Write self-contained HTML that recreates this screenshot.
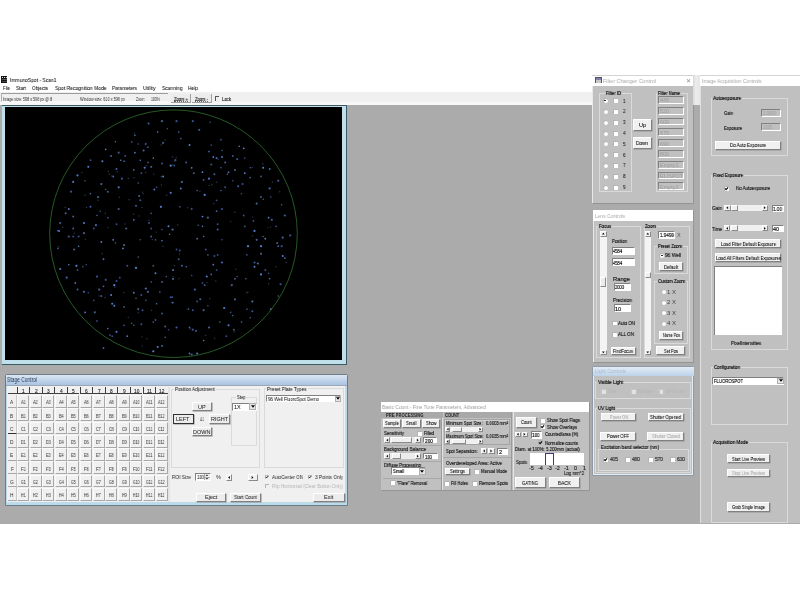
<!DOCTYPE html><html><head><meta charset="utf-8"><style>
html,body{margin:0;padding:0;}
body{width:800px;height:600px;position:relative;overflow:hidden;background:#fff;font-family:"Liberation Sans",sans-serif;}
div{position:absolute;box-sizing:border-box;}
svg{overflow:visible;}
.t{white-space:nowrap;transform-origin:0 50%;will-change:transform;}
</style></head><body>
<div style="left:1px;top:76.2px;width:6.20px;height:7.00px;background:#161616;"></div>
<div style="left:2px;top:77px;width:1.00px;height:1.20px;background:#ddd;"></div>
<div style="left:3.8px;top:77px;width:1.00px;height:1.20px;background:#ddd;"></div>
<div style="left:5.6px;top:77px;width:1.00px;height:1.20px;background:#ddd;"></div>
<div style="left:1.6px;top:79.4px;width:5.00px;height:0.70px;background:#555;"></div>
<div style="left:1.6px;top:81px;width:5.00px;height:0.60px;background:#444;"></div>
<div class="t" style="left:10.00px;top:75.00px;font-size:5.5px;line-height:10px;color:#111;transform:scaleX(0.900);-webkit-text-stroke:0.04px #111;">ImmunoSpot - Scan1</div>
<div class="t" style="left:3.00px;top:83.00px;font-size:6px;line-height:10px;color:#111;transform:scaleX(0.724);-webkit-text-stroke:0.05px #111;">File</div>
<div class="t" style="left:16.00px;top:83.00px;font-size:6px;line-height:10px;color:#111;transform:scaleX(0.789);-webkit-text-stroke:0.05px #111;">Start</div>
<div class="t" style="left:32.00px;top:83.00px;font-size:6px;line-height:10px;color:#111;transform:scaleX(0.787);-webkit-text-stroke:0.05px #111;">Objects</div>
<div class="t" style="left:55.00px;top:83.00px;font-size:6px;line-height:10px;color:#111;transform:scaleX(0.827);-webkit-text-stroke:0.05px #111;">Spot Recognition Mode</div>
<div class="t" style="left:112.00px;top:83.00px;font-size:6px;line-height:10px;color:#111;transform:scaleX(0.806);-webkit-text-stroke:0.05px #111;">Parameters</div>
<div class="t" style="left:143.00px;top:83.00px;font-size:6px;line-height:10px;color:#111;transform:scaleX(0.852);-webkit-text-stroke:0.05px #111;">Utility</div>
<div class="t" style="left:161.50px;top:83.00px;font-size:6px;line-height:10px;color:#111;transform:scaleX(0.819);-webkit-text-stroke:0.05px #111;">Scanning</div>
<div class="t" style="left:188.00px;top:83.00px;font-size:6px;line-height:10px;color:#111;transform:scaleX(0.810);-webkit-text-stroke:0.05px #111;">Help</div>
<div style="left:0px;top:105px;width:800.00px;height:418.50px;background:#ababab;"></div>
<div style="left:0px;top:92px;width:800.00px;height:13.00px;background:#f0f0f0;"></div>
<div style="left:0px;top:102.3px;width:800.00px;height:2.70px;background:#f7f9f9;"></div>
<div style="left:0.5px;top:92.6px;width:167.50px;height:9.40px;border-top:1px solid #9c9c9c;border-left:1px solid #b0b0b0;border-bottom:1px solid #fafafa;"></div>
<div class="t" style="left:3.00px;top:94.00px;font-size:5px;line-height:10px;color:#333;transform:scaleX(0.740);">Image size:  598 x 598 px @ 8</div>
<div class="t" style="left:80.00px;top:94.00px;font-size:5px;line-height:10px;color:#333;transform:scaleX(0.756);">Window size:  610 x 598 px</div>
<div class="t" style="left:136.00px;top:94.00px;font-size:5px;line-height:10px;color:#333;transform:scaleX(0.635);">Zoom:</div>
<div class="t" style="left:151.00px;top:94.00px;font-size:5px;line-height:10px;color:#333;transform:scaleX(0.704);">100%</div>
<div style="left:171px;top:94px;width:20.00px;height:9.00px;background:#ececec;border-right:1px solid #a0a0a0;border-bottom:1px solid #a0a0a0;"></div>
<div class="t" style="left:174.00px;top:95.00px;font-size:4.8px;line-height:10px;color:#222;transform:scaleX(0.853);-webkit-text-stroke:0.14px #222;">Zoom +</div>
<div style="left:174px;top:101.2px;width:14.00px;height:0.60px;border-top:0.5px dotted #666;"></div>
<div style="left:191.5px;top:94px;width:20.00px;height:9.00px;background:#ececec;border-right:1px solid #a0a0a0;border-bottom:1px solid #a0a0a0;"></div>
<div class="t" style="left:195.00px;top:95.00px;font-size:4.8px;line-height:10px;color:#222;transform:scaleX(0.855);-webkit-text-stroke:0.14px #222;">Zoom -</div>
<div style="left:195px;top:101.2px;width:13.00px;height:0.60px;border-top:0.5px dotted #666;"></div>
<div style="left:214.7px;top:95.8px;width:4.30px;height:5.20px;border-top:1px solid #555;border-left:1px solid #555;"></div>
<div class="t" style="left:222.00px;top:95.00px;font-size:4.8px;line-height:10px;color:#222;transform:scaleX(0.888);-webkit-text-stroke:0.14px #222;">Lock</div>
<div style="left:1.5px;top:105px;width:345.00px;height:259.50px;background:#bfe0ea;border-bottom:1px solid #3b5a66;border-right:1px solid #3b5a66;border-top:1.6px solid #3f5a60;"></div>
<div style="left:5px;top:107px;width:336.70px;height:253.30px;background:#000;"></div>
<svg style="position:absolute;left:0;top:0" width="800" height="600"><circle cx="173.5" cy="233.7" r="123.8" stroke="#358035" stroke-width="0.7" fill="none"/><circle cx="148.6" cy="123.4" r="1.0" fill="#4462a8"/><circle cx="162.0" cy="121.2" r="1.1" fill="#44608e"/><circle cx="167.4" cy="128.8" r="0.8" fill="#3a5290"/><circle cx="157.7" cy="132.1" r="0.8" fill="#4e72c0"/><circle cx="134.9" cy="135.3" r="0.8" fill="#5680cc"/><circle cx="131.7" cy="141.8" r="0.9" fill="#3a5290"/><circle cx="138.2" cy="144.0" r="0.8" fill="#38508a"/><circle cx="145.8" cy="144.0" r="1.1" fill="#3a5290"/><circle cx="147.9" cy="147.2" r="0.9" fill="#3a5290"/><circle cx="163.1" cy="142.9" r="1.1" fill="#3a5290"/><circle cx="115.4" cy="141.8" r="0.8" fill="#4462a8"/><circle cx="105.7" cy="149.4" r="0.8" fill="#5680cc"/><circle cx="118.7" cy="152.7" r="1.1" fill="#3a5290"/><circle cx="125.2" cy="155.9" r="0.9" fill="#3a5290"/><circle cx="134.9" cy="152.7" r="0.9" fill="#4e72c0"/><circle cx="143.6" cy="150.5" r="1.1" fill="#4462a8"/><circle cx="153.3" cy="158.1" r="0.8" fill="#5680cc"/><circle cx="102.4" cy="161.3" r="1.0" fill="#5680cc"/><circle cx="90.5" cy="160.2" r="0.9" fill="#3a5290"/><circle cx="111.1" cy="155.9" r="0.9" fill="#4e72c0"/><circle cx="120.8" cy="160.2" r="0.8" fill="#5680cc"/><circle cx="124.1" cy="161.3" r="0.8" fill="#5680cc"/><circle cx="140.3" cy="160.2" r="0.8" fill="#5680cc"/><circle cx="147.9" cy="162.4" r="0.9" fill="#38508a"/><circle cx="151.2" cy="166.8" r="1.1" fill="#4a5a7a"/><circle cx="162.0" cy="163.5" r="1.0" fill="#38508a"/><circle cx="88.3" cy="166.8" r="1.1" fill="#4e72c0"/><circle cx="116.5" cy="168.9" r="1.0" fill="#4462a8"/><circle cx="133.8" cy="170.0" r="0.9" fill="#44608e"/><circle cx="141.4" cy="173.2" r="0.9" fill="#3a5290"/><circle cx="144.7" cy="167.8" r="1.0" fill="#5680cc"/><circle cx="77.5" cy="175.4" r="1.1" fill="#4e72c0"/><circle cx="73.2" cy="181.9" r="1.1" fill="#4e72c0"/><circle cx="85.1" cy="180.8" r="0.8" fill="#3a5290"/><circle cx="101.3" cy="184.1" r="1.1" fill="#4462a8"/><circle cx="113.2" cy="176.5" r="1.0" fill="#4462a8"/><circle cx="121.9" cy="178.7" r="1.1" fill="#38508a"/><circle cx="138.2" cy="183.0" r="0.8" fill="#44608e"/><circle cx="156.6" cy="187.3" r="0.8" fill="#4a5a7a"/><circle cx="154.4" cy="189.5" r="1.0" fill="#4e72c0"/><circle cx="163.1" cy="176.5" r="1.0" fill="#5680cc"/><circle cx="170.7" cy="165.7" r="1.1" fill="#5680cc"/><circle cx="71.0" cy="191.7" r="1.1" fill="#3a5290"/><circle cx="90.5" cy="193.8" r="0.8" fill="#4e72c0"/><circle cx="98.1" cy="197.1" r="1.1" fill="#44608e"/><circle cx="105.7" cy="189.5" r="0.8" fill="#3a5290"/><circle cx="107.8" cy="191.7" r="1.0" fill="#44608e"/><circle cx="118.7" cy="187.3" r="1.1" fill="#4e72c0"/><circle cx="139.2" cy="196.0" r="1.1" fill="#44608e"/><circle cx="140.3" cy="200.3" r="1.0" fill="#3a5290"/><circle cx="170.7" cy="192.8" r="1.1" fill="#4e72c0"/><circle cx="68.8" cy="209.0" r="0.9" fill="#5680cc"/><circle cx="100.2" cy="211.2" r="0.8" fill="#38508a"/><circle cx="97.0" cy="215.5" r="0.8" fill="#4462a8"/><circle cx="90.5" cy="206.8" r="1.0" fill="#4462a8"/><circle cx="107.8" cy="217.7" r="0.9" fill="#38508a"/><circle cx="118.7" cy="209.0" r="1.1" fill="#4a5a7a"/><circle cx="136.0" cy="205.8" r="1.1" fill="#3a5290"/><circle cx="151.2" cy="213.3" r="0.9" fill="#38508a"/><circle cx="160.9" cy="206.8" r="1.1" fill="#5680cc"/><circle cx="65.6" cy="213.3" r="1.0" fill="#4462a8"/><circle cx="60.2" cy="223.1" r="1.1" fill="#4a5a7a"/><circle cx="73.2" cy="216.6" r="1.0" fill="#44608e"/><circle cx="84.0" cy="223.1" r="1.1" fill="#4e72c0"/><circle cx="95.9" cy="225.2" r="1.1" fill="#4462a8"/><circle cx="93.8" cy="228.5" r="0.9" fill="#3a5290"/><circle cx="73.2" cy="228.5" r="0.9" fill="#4462a8"/><circle cx="58.0" cy="230.7" r="0.9" fill="#44608e"/><circle cx="116.5" cy="224.2" r="0.9" fill="#3a5290"/><circle cx="126.2" cy="228.5" r="1.1" fill="#4a5a7a"/><circle cx="133.8" cy="219.8" r="0.9" fill="#4e72c0"/><circle cx="149.0" cy="223.1" r="1.0" fill="#3a5290"/><circle cx="151.2" cy="228.5" r="0.9" fill="#38508a"/><circle cx="168.5" cy="226.3" r="1.0" fill="#5680cc"/><circle cx="172.8" cy="229.6" r="1.0" fill="#4462a8"/><circle cx="162.0" cy="229.6" r="0.8" fill="#38508a"/><circle cx="176.5" cy="121.2" r="1.1" fill="#38508a"/><circle cx="192.8" cy="121.2" r="1.1" fill="#38508a"/><circle cx="210.1" cy="122.3" r="0.8" fill="#38508a"/><circle cx="199.2" cy="129.9" r="1.1" fill="#3a5290"/><circle cx="178.7" cy="132.1" r="0.9" fill="#3a5290"/><circle cx="180.8" cy="138.6" r="0.9" fill="#38508a"/><circle cx="220.9" cy="139.7" r="0.9" fill="#3a5290"/><circle cx="189.5" cy="145.1" r="1.0" fill="#5680cc"/><circle cx="211.2" cy="145.1" r="0.8" fill="#3a5290"/><circle cx="239.3" cy="146.2" r="0.8" fill="#5680cc"/><circle cx="243.7" cy="148.3" r="0.9" fill="#5680cc"/><circle cx="209.0" cy="151.6" r="0.8" fill="#4e72c0"/><circle cx="222.0" cy="150.5" r="0.8" fill="#3a5290"/><circle cx="213.3" cy="157.0" r="0.9" fill="#5680cc"/><circle cx="216.6" cy="158.1" r="1.1" fill="#4462a8"/><circle cx="222.0" cy="157.0" r="1.0" fill="#4e72c0"/><circle cx="232.8" cy="155.9" r="1.0" fill="#38508a"/><circle cx="244.8" cy="158.1" r="0.8" fill="#3a5290"/><circle cx="237.2" cy="159.2" r="1.1" fill="#38508a"/><circle cx="175.4" cy="160.2" r="1.1" fill="#38508a"/><circle cx="186.2" cy="162.4" r="1.0" fill="#3a5290"/><circle cx="174.3" cy="165.7" r="0.9" fill="#3a5290"/><circle cx="225.2" cy="162.4" r="1.0" fill="#44608e"/><circle cx="211.2" cy="164.6" r="1.0" fill="#38508a"/><circle cx="191.7" cy="167.8" r="0.9" fill="#5680cc"/><circle cx="220.9" cy="167.8" r="0.8" fill="#4462a8"/><circle cx="228.5" cy="172.2" r="1.0" fill="#4462a8"/><circle cx="227.4" cy="174.3" r="0.8" fill="#4a5a7a"/><circle cx="235.0" cy="170.0" r="1.0" fill="#44608e"/><circle cx="250.2" cy="167.8" r="0.8" fill="#44608e"/><circle cx="263.2" cy="167.8" r="1.0" fill="#5680cc"/><circle cx="269.7" cy="168.9" r="1.0" fill="#4462a8"/><circle cx="193.8" cy="173.2" r="1.0" fill="#4a5a7a"/><circle cx="202.5" cy="172.2" r="0.9" fill="#5680cc"/><circle cx="214.4" cy="174.3" r="1.0" fill="#44608e"/><circle cx="244.8" cy="173.2" r="0.9" fill="#5680cc"/><circle cx="250.2" cy="177.6" r="0.9" fill="#4a5a7a"/><circle cx="261.0" cy="176.5" r="0.9" fill="#4a5a7a"/><circle cx="181.9" cy="181.9" r="1.1" fill="#44608e"/><circle cx="203.6" cy="179.8" r="0.9" fill="#4462a8"/><circle cx="209.0" cy="178.7" r="1.1" fill="#4e72c0"/><circle cx="232.8" cy="180.8" r="0.8" fill="#3a5290"/><circle cx="242.6" cy="184.1" r="1.0" fill="#38508a"/><circle cx="238.2" cy="186.2" r="1.0" fill="#4462a8"/><circle cx="225.2" cy="187.3" r="1.0" fill="#38508a"/><circle cx="180.8" cy="188.4" r="1.0" fill="#4e72c0"/><circle cx="197.1" cy="190.6" r="0.8" fill="#4462a8"/><circle cx="220.9" cy="190.6" r="0.8" fill="#4462a8"/><circle cx="269.7" cy="188.4" r="1.1" fill="#4462a8"/><circle cx="278.3" cy="180.8" r="1.0" fill="#4462a8"/><circle cx="204.7" cy="194.9" r="1.1" fill="#5680cc"/><circle cx="241.5" cy="193.8" r="0.8" fill="#38508a"/><circle cx="261.0" cy="197.1" r="1.0" fill="#4a5a7a"/><circle cx="263.2" cy="199.2" r="0.8" fill="#4a5a7a"/><circle cx="270.8" cy="197.1" r="0.8" fill="#38508a"/><circle cx="216.6" cy="200.3" r="0.9" fill="#38508a"/><circle cx="179.8" cy="206.8" r="0.9" fill="#38508a"/><circle cx="191.7" cy="209.0" r="1.0" fill="#3a5290"/><circle cx="222.0" cy="209.0" r="1.1" fill="#38508a"/><circle cx="256.7" cy="203.6" r="1.1" fill="#44608e"/><circle cx="281.6" cy="204.7" r="0.8" fill="#44608e"/><circle cx="216.6" cy="211.2" r="0.9" fill="#4462a8"/><circle cx="243.7" cy="215.5" r="0.9" fill="#3a5290"/><circle cx="202.5" cy="216.6" r="0.9" fill="#5680cc"/><circle cx="207.9" cy="217.7" r="1.1" fill="#4a5a7a"/><circle cx="268.6" cy="217.7" r="0.9" fill="#5680cc"/><circle cx="271.8" cy="219.8" r="1.1" fill="#44608e"/><circle cx="284.8" cy="215.5" r="1.0" fill="#4462a8"/><circle cx="253.4" cy="220.9" r="0.9" fill="#3a5290"/><circle cx="198.2" cy="225.2" r="0.8" fill="#4a5a7a"/><circle cx="202.5" cy="226.3" r="0.8" fill="#5680cc"/><circle cx="217.7" cy="224.2" r="0.9" fill="#38508a"/><circle cx="244.8" cy="226.3" r="0.9" fill="#4a5a7a"/><circle cx="276.2" cy="226.3" r="0.9" fill="#3a5290"/><circle cx="217.7" cy="229.6" r="1.0" fill="#4462a8"/><circle cx="254.5" cy="230.7" r="1.0" fill="#5680cc"/><circle cx="172.2" cy="229.6" r="0.9" fill="#4a5a7a"/><circle cx="59.1" cy="231.1" r="1.0" fill="#4e72c0"/><circle cx="68.8" cy="236.5" r="1.1" fill="#4a5a7a"/><circle cx="73.2" cy="236.5" r="0.9" fill="#3a5290"/><circle cx="78.6" cy="236.5" r="1.0" fill="#38508a"/><circle cx="84.0" cy="233.2" r="1.1" fill="#4a5a7a"/><circle cx="101.3" cy="241.9" r="0.9" fill="#5680cc"/><circle cx="113.2" cy="239.8" r="0.9" fill="#5680cc"/><circle cx="115.4" cy="243.0" r="0.8" fill="#4a5a7a"/><circle cx="124.1" cy="245.2" r="1.1" fill="#4a5a7a"/><circle cx="123.0" cy="248.4" r="0.9" fill="#5680cc"/><circle cx="140.3" cy="239.8" r="0.8" fill="#4a5a7a"/><circle cx="151.2" cy="236.5" r="0.9" fill="#4462a8"/><circle cx="155.5" cy="239.8" r="0.9" fill="#38508a"/><circle cx="162.0" cy="240.8" r="0.8" fill="#5680cc"/><circle cx="169.6" cy="234.3" r="0.8" fill="#4e72c0"/><circle cx="74.2" cy="249.5" r="1.1" fill="#4a5a7a"/><circle cx="78.6" cy="246.2" r="0.8" fill="#5680cc"/><circle cx="58.0" cy="248.4" r="0.8" fill="#4462a8"/><circle cx="103.5" cy="259.2" r="0.9" fill="#4e72c0"/><circle cx="138.2" cy="257.1" r="0.8" fill="#4a5a7a"/><circle cx="68.8" cy="264.7" r="0.8" fill="#5680cc"/><circle cx="76.4" cy="265.8" r="1.1" fill="#5680cc"/><circle cx="82.9" cy="266.8" r="0.8" fill="#4a5a7a"/><circle cx="86.2" cy="264.7" r="0.8" fill="#38508a"/><circle cx="60.2" cy="269.0" r="1.0" fill="#5680cc"/><circle cx="77.5" cy="270.1" r="0.9" fill="#44608e"/><circle cx="127.3" cy="265.8" r="1.0" fill="#38508a"/><circle cx="136.0" cy="267.9" r="1.1" fill="#5680cc"/><circle cx="153.3" cy="265.8" r="0.9" fill="#44608e"/><circle cx="155.5" cy="273.3" r="1.0" fill="#5680cc"/><circle cx="172.8" cy="270.1" r="0.9" fill="#4a5a7a"/><circle cx="66.7" cy="277.7" r="1.1" fill="#4462a8"/><circle cx="97.0" cy="276.6" r="1.1" fill="#3a5290"/><circle cx="105.7" cy="279.8" r="1.1" fill="#38508a"/><circle cx="116.5" cy="280.9" r="1.0" fill="#3a5290"/><circle cx="119.8" cy="277.7" r="0.9" fill="#38508a"/><circle cx="151.2" cy="282.0" r="0.8" fill="#4462a8"/><circle cx="162.0" cy="282.0" r="1.0" fill="#4a5a7a"/><circle cx="166.3" cy="276.6" r="0.8" fill="#4a5a7a"/><circle cx="172.8" cy="278.8" r="0.9" fill="#44608e"/><circle cx="75.3" cy="283.1" r="1.0" fill="#4462a8"/><circle cx="77.5" cy="289.6" r="1.0" fill="#4462a8"/><circle cx="84.0" cy="291.8" r="1.1" fill="#4462a8"/><circle cx="88.3" cy="292.8" r="0.8" fill="#38508a"/><circle cx="99.2" cy="289.6" r="1.1" fill="#4462a8"/><circle cx="103.5" cy="286.3" r="0.9" fill="#4462a8"/><circle cx="114.3" cy="285.2" r="1.1" fill="#5680cc"/><circle cx="145.8" cy="288.5" r="1.1" fill="#4e72c0"/><circle cx="147.9" cy="291.8" r="1.1" fill="#4462a8"/><circle cx="133.8" cy="292.8" r="1.0" fill="#4e72c0"/><circle cx="136.0" cy="298.2" r="0.8" fill="#44608e"/><circle cx="141.4" cy="295.0" r="1.0" fill="#3a5290"/><circle cx="111.1" cy="295.0" r="1.0" fill="#5680cc"/><circle cx="101.3" cy="296.1" r="1.1" fill="#38508a"/><circle cx="93.8" cy="300.4" r="0.8" fill="#38508a"/><circle cx="112.2" cy="303.7" r="1.0" fill="#5680cc"/><circle cx="114.3" cy="305.8" r="1.0" fill="#5680cc"/><circle cx="145.8" cy="300.4" r="0.8" fill="#3a5290"/><circle cx="159.8" cy="291.8" r="0.9" fill="#3a5290"/><circle cx="156.6" cy="303.7" r="0.8" fill="#4e72c0"/><circle cx="170.7" cy="297.2" r="1.0" fill="#3a5290"/><circle cx="172.8" cy="302.6" r="0.9" fill="#4e72c0"/><circle cx="124.1" cy="306.9" r="0.9" fill="#4a5a7a"/><circle cx="138.2" cy="309.1" r="1.1" fill="#4a5a7a"/><circle cx="142.5" cy="310.2" r="1.0" fill="#38508a"/><circle cx="85.1" cy="312.3" r="0.9" fill="#5680cc"/><circle cx="94.8" cy="312.3" r="1.1" fill="#44608e"/><circle cx="162.0" cy="313.4" r="1.0" fill="#3a5290"/><circle cx="155.5" cy="319.9" r="1.0" fill="#3a5290"/><circle cx="153.3" cy="322.1" r="0.9" fill="#38508a"/><circle cx="97.0" cy="321.0" r="0.8" fill="#4e72c0"/><circle cx="131.7" cy="323.2" r="0.8" fill="#44608e"/><circle cx="133.8" cy="325.3" r="0.8" fill="#4a5a7a"/><circle cx="141.4" cy="324.2" r="1.0" fill="#3a5290"/><circle cx="124.1" cy="325.3" r="0.9" fill="#3a5290"/><circle cx="165.2" cy="326.4" r="1.0" fill="#4a5a7a"/><circle cx="168.5" cy="329.7" r="0.8" fill="#38508a"/><circle cx="107.8" cy="328.6" r="0.8" fill="#4e72c0"/><circle cx="116.5" cy="331.8" r="1.1" fill="#4e72c0"/><circle cx="110.0" cy="335.1" r="0.9" fill="#3a5290"/><circle cx="112.2" cy="336.2" r="0.9" fill="#3a5290"/><circle cx="127.3" cy="336.2" r="0.9" fill="#4e72c0"/><circle cx="165.2" cy="337.2" r="0.8" fill="#4462a8"/><circle cx="162.0" cy="345.9" r="0.9" fill="#4e72c0"/><circle cx="157.7" cy="347.0" r="1.0" fill="#5680cc"/><circle cx="103.5" cy="348.1" r="0.9" fill="#4e72c0"/><circle cx="153.3" cy="351.3" r="1.1" fill="#5680cc"/><circle cx="254.5" cy="231.1" r="0.9" fill="#4e72c0"/><circle cx="197.1" cy="238.7" r="1.0" fill="#4a5a7a"/><circle cx="203.6" cy="236.5" r="0.8" fill="#4e72c0"/><circle cx="222.0" cy="239.8" r="0.8" fill="#3a5290"/><circle cx="263.2" cy="236.5" r="0.8" fill="#44608e"/><circle cx="265.3" cy="238.7" r="0.9" fill="#5680cc"/><circle cx="282.7" cy="237.6" r="1.1" fill="#4462a8"/><circle cx="290.2" cy="235.4" r="1.1" fill="#3a5290"/><circle cx="256.7" cy="239.8" r="1.1" fill="#44608e"/><circle cx="248.0" cy="246.2" r="1.1" fill="#5680cc"/><circle cx="261.0" cy="246.2" r="1.1" fill="#5680cc"/><circle cx="277.2" cy="243.0" r="1.0" fill="#44608e"/><circle cx="278.3" cy="246.2" r="0.9" fill="#4462a8"/><circle cx="281.6" cy="246.2" r="1.0" fill="#4462a8"/><circle cx="176.5" cy="249.5" r="0.9" fill="#38508a"/><circle cx="179.8" cy="250.6" r="1.0" fill="#3a5290"/><circle cx="205.8" cy="249.5" r="0.9" fill="#3a5290"/><circle cx="207.9" cy="254.9" r="0.8" fill="#44608e"/><circle cx="214.4" cy="256.0" r="1.0" fill="#38508a"/><circle cx="217.7" cy="254.9" r="0.9" fill="#3a5290"/><circle cx="246.9" cy="254.9" r="0.8" fill="#44608e"/><circle cx="261.0" cy="253.8" r="1.1" fill="#4a5a7a"/><circle cx="282.7" cy="256.0" r="1.0" fill="#5680cc"/><circle cx="284.8" cy="258.2" r="0.9" fill="#44608e"/><circle cx="178.7" cy="259.2" r="1.0" fill="#3a5290"/><circle cx="222.0" cy="262.5" r="1.1" fill="#4462a8"/><circle cx="213.3" cy="264.7" r="0.9" fill="#4e72c0"/><circle cx="254.5" cy="262.5" r="1.1" fill="#3a5290"/><circle cx="257.8" cy="263.6" r="1.0" fill="#4e72c0"/><circle cx="254.5" cy="266.8" r="1.0" fill="#5680cc"/><circle cx="181.9" cy="265.8" r="1.0" fill="#4462a8"/><circle cx="186.2" cy="266.8" r="0.8" fill="#4e72c0"/><circle cx="173.2" cy="270.1" r="0.9" fill="#4e72c0"/><circle cx="216.6" cy="270.1" r="0.9" fill="#3a5290"/><circle cx="265.3" cy="270.1" r="1.0" fill="#38508a"/><circle cx="191.7" cy="275.5" r="0.8" fill="#38508a"/><circle cx="206.8" cy="276.6" r="1.0" fill="#5680cc"/><circle cx="211.2" cy="274.4" r="0.9" fill="#4462a8"/><circle cx="237.2" cy="276.6" r="0.8" fill="#3a5290"/><circle cx="235.0" cy="278.8" r="1.0" fill="#4a5a7a"/><circle cx="245.8" cy="278.8" r="0.8" fill="#4462a8"/><circle cx="261.0" cy="274.4" r="1.1" fill="#5680cc"/><circle cx="268.6" cy="273.3" r="0.8" fill="#38508a"/><circle cx="269.7" cy="278.8" r="0.8" fill="#4e72c0"/><circle cx="173.2" cy="278.8" r="1.0" fill="#44608e"/><circle cx="202.5" cy="283.1" r="0.9" fill="#3a5290"/><circle cx="204.7" cy="285.2" r="0.9" fill="#44608e"/><circle cx="231.8" cy="285.2" r="1.1" fill="#4a5a7a"/><circle cx="280.5" cy="284.2" r="1.0" fill="#44608e"/><circle cx="194.9" cy="289.6" r="1.1" fill="#4462a8"/><circle cx="200.3" cy="299.3" r="1.0" fill="#44608e"/><circle cx="197.1" cy="301.5" r="0.9" fill="#3a5290"/><circle cx="235.0" cy="299.3" r="1.1" fill="#44608e"/><circle cx="252.3" cy="301.5" r="0.9" fill="#5680cc"/><circle cx="278.3" cy="296.1" r="0.8" fill="#4a5a7a"/><circle cx="172.2" cy="297.2" r="0.9" fill="#3a5290"/><circle cx="207.9" cy="305.8" r="0.8" fill="#3a5290"/><circle cx="188.4" cy="309.1" r="0.9" fill="#44608e"/><circle cx="192.8" cy="310.2" r="1.0" fill="#3a5290"/><circle cx="203.6" cy="310.2" r="1.1" fill="#4a5a7a"/><circle cx="224.2" cy="308.0" r="1.1" fill="#5680cc"/><circle cx="230.7" cy="312.3" r="0.8" fill="#44608e"/><circle cx="232.8" cy="315.6" r="0.8" fill="#44608e"/><circle cx="246.9" cy="309.1" r="0.9" fill="#38508a"/><circle cx="252.3" cy="311.2" r="1.0" fill="#3a5290"/><circle cx="270.8" cy="309.1" r="1.1" fill="#4a5a7a"/><circle cx="172.2" cy="302.6" r="0.8" fill="#44608e"/><circle cx="250.2" cy="317.8" r="0.8" fill="#44608e"/><circle cx="219.8" cy="322.1" r="0.8" fill="#44608e"/><circle cx="228.5" cy="325.3" r="1.1" fill="#4e72c0"/><circle cx="241.5" cy="322.1" r="0.8" fill="#4a5a7a"/><circle cx="176.5" cy="327.5" r="1.0" fill="#4462a8"/><circle cx="189.5" cy="327.5" r="0.9" fill="#4462a8"/><circle cx="192.8" cy="329.7" r="1.1" fill="#38508a"/><circle cx="196.0" cy="330.8" r="1.1" fill="#3a5290"/><circle cx="209.0" cy="327.5" r="1.1" fill="#44608e"/><circle cx="233.9" cy="329.7" r="1.0" fill="#4a5a7a"/><circle cx="203.6" cy="340.5" r="0.8" fill="#5680cc"/><circle cx="226.3" cy="336.2" r="0.9" fill="#3a5290"/><circle cx="189.5" cy="353.5" r="0.9" fill="#4e72c0"/><circle cx="191.7" cy="354.6" r="1.0" fill="#44608e"/><circle cx="197.1" cy="353.5" r="1.0" fill="#5680cc"/><circle cx="215.8" cy="281.0" r="0.7" fill="#2e3850"/><circle cx="216.7" cy="182.3" r="0.7" fill="#2e3850"/><circle cx="177.6" cy="225.0" r="0.7" fill="#2e3850"/><circle cx="165.2" cy="139.9" r="0.7" fill="#2e3850"/><circle cx="161.1" cy="176.8" r="0.7" fill="#2e3850"/><circle cx="102.3" cy="253.7" r="0.7" fill="#2e3850"/><circle cx="85.4" cy="239.6" r="0.7" fill="#2e3850"/><circle cx="252.3" cy="235.9" r="0.7" fill="#2e3850"/><circle cx="268.7" cy="283.7" r="0.7" fill="#2e3850"/><circle cx="161.4" cy="185.0" r="0.7" fill="#2e3850"/><circle cx="85.1" cy="195.3" r="0.7" fill="#2e3850"/><circle cx="128.3" cy="317.4" r="0.7" fill="#2e3850"/><circle cx="272.3" cy="182.0" r="0.7" fill="#2e3850"/><circle cx="142.1" cy="207.4" r="0.7" fill="#2e3850"/><circle cx="139.2" cy="216.0" r="0.7" fill="#2e3850"/><circle cx="111.8" cy="176.1" r="0.7" fill="#2e3850"/><circle cx="176.2" cy="157.4" r="0.7" fill="#2e3850"/><circle cx="142.3" cy="345.9" r="0.7" fill="#2e3850"/><circle cx="205.7" cy="335.4" r="0.7" fill="#2e3850"/><circle cx="281.9" cy="245.8" r="0.7" fill="#2e3850"/><circle cx="230.7" cy="221.6" r="0.7" fill="#2e3850"/><circle cx="235.7" cy="269.2" r="0.7" fill="#2e3850"/><circle cx="166.7" cy="195.2" r="0.7" fill="#2e3850"/><circle cx="123.8" cy="292.5" r="0.7" fill="#2e3850"/><circle cx="211.9" cy="184.7" r="0.7" fill="#2e3850"/><circle cx="187.6" cy="207.7" r="0.7" fill="#2e3850"/><circle cx="172.8" cy="164.8" r="0.7" fill="#2e3850"/><circle cx="161.2" cy="145.0" r="0.7" fill="#2e3850"/><circle cx="134.6" cy="133.1" r="0.7" fill="#2e3850"/><circle cx="109.3" cy="174.3" r="0.7" fill="#2e3850"/><circle cx="190.6" cy="329.0" r="0.7" fill="#2e3850"/><circle cx="234.9" cy="212.2" r="0.7" fill="#2e3850"/><circle cx="152.3" cy="239.6" r="0.7" fill="#2e3850"/><circle cx="143.2" cy="193.9" r="0.7" fill="#2e3850"/><circle cx="174.3" cy="265.6" r="0.7" fill="#2e3850"/><circle cx="262.8" cy="163.8" r="0.7" fill="#2e3850"/><circle cx="117.2" cy="171.8" r="0.7" fill="#2e3850"/><circle cx="148.8" cy="220.4" r="0.7" fill="#2e3850"/><circle cx="270.8" cy="227.1" r="0.7" fill="#2e3850"/><circle cx="146.8" cy="338.7" r="0.7" fill="#2e3850"/><circle cx="179.0" cy="278.5" r="0.7" fill="#2e3850"/><circle cx="209.7" cy="298.8" r="0.7" fill="#2e3850"/><circle cx="163.0" cy="246.4" r="0.7" fill="#2e3850"/><circle cx="209.3" cy="185.4" r="0.7" fill="#2e3850"/><circle cx="82.0" cy="172.6" r="0.7" fill="#2e3850"/><circle cx="207.0" cy="282.6" r="0.7" fill="#2e3850"/><circle cx="179.5" cy="254.1" r="0.7" fill="#2e3850"/><circle cx="146.0" cy="165.7" r="0.7" fill="#2e3850"/><circle cx="124.7" cy="224.0" r="0.7" fill="#2e3850"/><circle cx="267.9" cy="227.6" r="0.7" fill="#2e3850"/><circle cx="108.3" cy="171.5" r="0.7" fill="#2e3850"/><circle cx="173.1" cy="276.6" r="0.7" fill="#2e3850"/><circle cx="153.8" cy="174.0" r="0.7" fill="#2e3850"/><circle cx="214.7" cy="338.3" r="0.7" fill="#2e3850"/><circle cx="133.7" cy="214.2" r="0.7" fill="#2e3850"/><circle cx="218.4" cy="159.4" r="0.7" fill="#2e3850"/><circle cx="246.6" cy="292.5" r="0.7" fill="#2e3850"/><circle cx="174.7" cy="161.2" r="0.7" fill="#2e3850"/><circle cx="252.2" cy="167.5" r="0.7" fill="#2e3850"/><circle cx="105.0" cy="297.8" r="0.7" fill="#2e3850"/><circle cx="172.5" cy="156.8" r="0.7" fill="#2e3850"/><circle cx="105.4" cy="213.3" r="0.7" fill="#2e3850"/><circle cx="86.5" cy="207.5" r="0.7" fill="#2e3850"/><circle cx="65.3" cy="207.5" r="0.7" fill="#2e3850"/><circle cx="279.7" cy="191.7" r="0.7" fill="#2e3850"/><circle cx="213.9" cy="203.8" r="0.7" fill="#2e3850"/><circle cx="142.5" cy="192.3" r="0.7" fill="#2e3850"/><circle cx="119.3" cy="197.2" r="0.7" fill="#2e3850"/><circle cx="138.2" cy="312.8" r="0.7" fill="#2e3850"/><circle cx="252.7" cy="217.1" r="0.7" fill="#2e3850"/><circle cx="62.6" cy="227.2" r="0.7" fill="#2e3850"/><circle cx="142.2" cy="336.9" r="0.7" fill="#2e3850"/><circle cx="98.0" cy="200.3" r="0.7" fill="#2e3850"/><circle cx="151.6" cy="310.4" r="0.7" fill="#2e3850"/><circle cx="234.3" cy="331.7" r="0.7" fill="#2e3850"/><circle cx="133.9" cy="177.7" r="0.7" fill="#2e3850"/><circle cx="286.1" cy="262.5" r="0.7" fill="#2e3850"/><circle cx="115.0" cy="287.0" r="0.7" fill="#2e3850"/><circle cx="128.4" cy="178.5" r="0.7" fill="#2e3850"/><circle cx="275.9" cy="266.7" r="0.7" fill="#2e3850"/><circle cx="108.0" cy="227.6" r="0.7" fill="#2e3850"/><circle cx="145.6" cy="172.5" r="0.7" fill="#2e3850"/><circle cx="156.3" cy="232.1" r="0.7" fill="#2e3850"/><circle cx="247.9" cy="292.4" r="0.7" fill="#2e3850"/><circle cx="252.9" cy="300.8" r="0.7" fill="#2e3850"/><circle cx="199.9" cy="191.3" r="0.7" fill="#2e3850"/><circle cx="129.1" cy="199.7" r="0.7" fill="#2e3850"/><circle cx="99.0" cy="295.9" r="0.7" fill="#2e3850"/><circle cx="58.8" cy="246.6" r="0.7" fill="#2e3850"/><circle cx="74.2" cy="233.3" r="0.7" fill="#2e3850"/></svg>
<div style="left:4.5px;top:373.5px;width:343.50px;height:132.30px;background:#bcdcec;border:1px solid #6a7c88;border-radius:1.5px 1.5px 0 0;"></div>
<div style="left:5.5px;top:374.5px;width:341.50px;height:11.00px;background:linear-gradient(#dce7f2,#a9c4e3);border-bottom:0.7px solid #9aa8b8;"></div>
<div style="left:6.8px;top:385.5px;width:338.40px;height:116.50px;background:#f0f0f0;"></div>
<div class="t" style="left:7.00px;top:375.00px;font-size:6.3px;line-height:10px;color:#1d3557;transform:scaleX(0.779);">Stage Control</div>
<div style="left:7.5px;top:386.6px;width:9.00px;height:7.90px;background:#f0f0f0;border-bottom:1px solid #404040;"></div>
<div style="left:16.5px;top:386.6px;width:12.60px;height:7.90px;background:#f0f0f0;border-left:1px solid #404040;border-bottom:1px solid #404040;"></div>
<div class="t" style="left:21.97px;top:387.00px;font-size:4.8px;line-height:10px;color:#222;-webkit-text-stroke:0.1px #222;">1</div>
<div style="left:29.1px;top:386.6px;width:12.60px;height:7.90px;background:#f0f0f0;border-left:1px solid #404040;border-bottom:1px solid #404040;"></div>
<div class="t" style="left:34.57px;top:387.00px;font-size:4.8px;line-height:10px;color:#222;-webkit-text-stroke:0.1px #222;">2</div>
<div style="left:41.7px;top:386.6px;width:12.60px;height:7.90px;background:#f0f0f0;border-left:1px solid #404040;border-bottom:1px solid #404040;"></div>
<div class="t" style="left:47.17px;top:387.00px;font-size:4.8px;line-height:10px;color:#222;-webkit-text-stroke:0.1px #222;">3</div>
<div style="left:54.3px;top:386.6px;width:12.60px;height:7.90px;background:#f0f0f0;border-left:1px solid #404040;border-bottom:1px solid #404040;"></div>
<div class="t" style="left:59.77px;top:387.00px;font-size:4.8px;line-height:10px;color:#222;-webkit-text-stroke:0.1px #222;">4</div>
<div style="left:66.9px;top:386.6px;width:12.60px;height:7.90px;background:#f0f0f0;border-left:1px solid #404040;border-bottom:1px solid #404040;"></div>
<div class="t" style="left:72.37px;top:387.00px;font-size:4.8px;line-height:10px;color:#222;-webkit-text-stroke:0.1px #222;">5</div>
<div style="left:79.5px;top:386.6px;width:12.60px;height:7.90px;background:#f0f0f0;border-left:1px solid #404040;border-bottom:1px solid #404040;"></div>
<div class="t" style="left:84.97px;top:387.00px;font-size:4.8px;line-height:10px;color:#222;-webkit-text-stroke:0.1px #222;">6</div>
<div style="left:92.1px;top:386.6px;width:12.60px;height:7.90px;background:#f0f0f0;border-left:1px solid #404040;border-bottom:1px solid #404040;"></div>
<div class="t" style="left:97.57px;top:387.00px;font-size:4.8px;line-height:10px;color:#222;-webkit-text-stroke:0.1px #222;">7</div>
<div style="left:104.7px;top:386.6px;width:12.60px;height:7.90px;background:#f0f0f0;border-left:1px solid #404040;border-bottom:1px solid #404040;"></div>
<div class="t" style="left:110.17px;top:387.00px;font-size:4.8px;line-height:10px;color:#222;-webkit-text-stroke:0.1px #222;">8</div>
<div style="left:117.3px;top:386.6px;width:12.60px;height:7.90px;background:#f0f0f0;border-left:1px solid #404040;border-bottom:1px solid #404040;"></div>
<div class="t" style="left:122.77px;top:387.00px;font-size:4.8px;line-height:10px;color:#222;-webkit-text-stroke:0.1px #222;">9</div>
<div style="left:129.89999999999998px;top:386.6px;width:12.60px;height:7.90px;background:#f0f0f0;border-left:1px solid #404040;border-bottom:1px solid #404040;"></div>
<div class="t" style="left:134.03px;top:387.00px;font-size:4.8px;line-height:10px;color:#222;-webkit-text-stroke:0.1px #222;">10</div>
<div style="left:142.5px;top:386.6px;width:12.60px;height:7.90px;background:#f0f0f0;border-left:1px solid #404040;border-bottom:1px solid #404040;"></div>
<div class="t" style="left:146.81px;top:387.00px;font-size:4.8px;line-height:10px;color:#222;-webkit-text-stroke:0.1px #222;">11</div>
<div style="left:155.1px;top:386.6px;width:12.60px;height:7.90px;background:#f0f0f0;border-left:1px solid #404040;border-bottom:1px solid #404040;"></div>
<div class="t" style="left:159.23px;top:387.00px;font-size:4.8px;line-height:10px;color:#222;-webkit-text-stroke:0.1px #222;">12</div>
<div style="left:7.5px;top:394.5px;width:9.00px;height:13.27px;background:#f0f0f0;border-bottom:1px solid #a8a8a8;border-right:0.6px solid #c8c8c8;"></div>
<div class="t" style="left:10.40px;top:398.00px;font-size:4.8px;line-height:10px;color:#333;">A</div>
<div style="left:17.0px;top:395.0px;width:12.10px;height:12.77px;background:#f0f0f0;border:1px solid;border-color:#fafafa #a8a8a8 #a8a8a8 #fafafa;"></div>
<div class="t" style="left:20.70px;top:398.00px;font-size:4.6px;line-height:10px;color:#333;transform:scaleX(0.853);">A1</div>
<div style="left:29.6px;top:395.0px;width:12.10px;height:12.77px;background:#f0f0f0;border:1px solid;border-color:#fafafa #a8a8a8 #a8a8a8 #fafafa;"></div>
<div class="t" style="left:33.30px;top:398.00px;font-size:4.6px;line-height:10px;color:#333;transform:scaleX(0.853);">A2</div>
<div style="left:42.2px;top:395.0px;width:12.10px;height:12.77px;background:#f0f0f0;border:1px solid;border-color:#fafafa #a8a8a8 #a8a8a8 #fafafa;"></div>
<div class="t" style="left:45.90px;top:398.00px;font-size:4.6px;line-height:10px;color:#333;transform:scaleX(0.853);">A3</div>
<div style="left:54.8px;top:395.0px;width:12.10px;height:12.77px;background:#f0f0f0;border:1px solid;border-color:#fafafa #a8a8a8 #a8a8a8 #fafafa;"></div>
<div class="t" style="left:58.50px;top:398.00px;font-size:4.6px;line-height:10px;color:#333;transform:scaleX(0.853);">A4</div>
<div style="left:67.4px;top:395.0px;width:12.10px;height:12.77px;background:#f0f0f0;border:1px solid;border-color:#fafafa #a8a8a8 #a8a8a8 #fafafa;"></div>
<div class="t" style="left:71.10px;top:398.00px;font-size:4.6px;line-height:10px;color:#333;transform:scaleX(0.853);">A5</div>
<div style="left:80.0px;top:395.0px;width:12.10px;height:12.77px;background:#f0f0f0;border:1px solid;border-color:#fafafa #a8a8a8 #a8a8a8 #fafafa;"></div>
<div class="t" style="left:83.70px;top:398.00px;font-size:4.6px;line-height:10px;color:#333;transform:scaleX(0.853);">A6</div>
<div style="left:92.6px;top:395.0px;width:12.10px;height:12.77px;background:#f0f0f0;border:1px solid;border-color:#fafafa #a8a8a8 #a8a8a8 #fafafa;"></div>
<div class="t" style="left:96.30px;top:398.00px;font-size:4.6px;line-height:10px;color:#333;transform:scaleX(0.853);">A7</div>
<div style="left:105.2px;top:395.0px;width:12.10px;height:12.77px;background:#f0f0f0;border:1px solid;border-color:#fafafa #a8a8a8 #a8a8a8 #fafafa;"></div>
<div class="t" style="left:108.90px;top:398.00px;font-size:4.6px;line-height:10px;color:#333;transform:scaleX(0.853);">A8</div>
<div style="left:117.8px;top:395.0px;width:12.10px;height:12.77px;background:#f0f0f0;border:1px solid;border-color:#fafafa #a8a8a8 #a8a8a8 #fafafa;"></div>
<div class="t" style="left:121.50px;top:398.00px;font-size:4.6px;line-height:10px;color:#333;transform:scaleX(0.853);">A9</div>
<div style="left:130.39999999999998px;top:395.0px;width:12.10px;height:12.77px;background:#f0f0f0;border:1px solid;border-color:#fafafa #a8a8a8 #a8a8a8 #fafafa;"></div>
<div class="t" style="left:133.25px;top:398.00px;font-size:4.6px;line-height:10px;color:#333;transform:scaleX(0.794);">A10</div>
<div style="left:143.0px;top:395.0px;width:12.10px;height:12.77px;background:#f0f0f0;border:1px solid;border-color:#fafafa #a8a8a8 #a8a8a8 #fafafa;"></div>
<div class="t" style="left:145.85px;top:398.00px;font-size:4.6px;line-height:10px;color:#333;transform:scaleX(0.829);">A11</div>
<div style="left:155.6px;top:395.0px;width:12.10px;height:12.77px;background:#f0f0f0;border:1px solid;border-color:#fafafa #a8a8a8 #a8a8a8 #fafafa;"></div>
<div class="t" style="left:158.45px;top:398.00px;font-size:4.6px;line-height:10px;color:#333;transform:scaleX(0.794);">A12</div>
<div style="left:7.5px;top:407.77px;width:9.00px;height:13.27px;background:#f0f0f0;border-bottom:1px solid #a8a8a8;border-right:0.6px solid #c8c8c8;"></div>
<div class="t" style="left:10.40px;top:412.00px;font-size:4.8px;line-height:10px;color:#333;">B</div>
<div style="left:17.0px;top:408.27px;width:12.10px;height:12.77px;background:#f0f0f0;border:1px solid;border-color:#fafafa #a8a8a8 #a8a8a8 #fafafa;"></div>
<div class="t" style="left:20.70px;top:412.00px;font-size:4.6px;line-height:10px;color:#333;transform:scaleX(0.853);">B1</div>
<div style="left:29.6px;top:408.27px;width:12.10px;height:12.77px;background:#f0f0f0;border:1px solid;border-color:#fafafa #a8a8a8 #a8a8a8 #fafafa;"></div>
<div class="t" style="left:33.30px;top:412.00px;font-size:4.6px;line-height:10px;color:#333;transform:scaleX(0.853);">B2</div>
<div style="left:42.2px;top:408.27px;width:12.10px;height:12.77px;background:#f0f0f0;border:1px solid;border-color:#fafafa #a8a8a8 #a8a8a8 #fafafa;"></div>
<div class="t" style="left:45.90px;top:412.00px;font-size:4.6px;line-height:10px;color:#333;transform:scaleX(0.853);">B3</div>
<div style="left:54.8px;top:408.27px;width:12.10px;height:12.77px;background:#f0f0f0;border:1px solid;border-color:#fafafa #a8a8a8 #a8a8a8 #fafafa;"></div>
<div class="t" style="left:58.50px;top:412.00px;font-size:4.6px;line-height:10px;color:#333;transform:scaleX(0.853);">B4</div>
<div style="left:67.4px;top:408.27px;width:12.10px;height:12.77px;background:#f0f0f0;border:1px solid;border-color:#fafafa #a8a8a8 #a8a8a8 #fafafa;"></div>
<div class="t" style="left:71.10px;top:412.00px;font-size:4.6px;line-height:10px;color:#333;transform:scaleX(0.853);">B5</div>
<div style="left:80.0px;top:408.27px;width:12.10px;height:12.77px;background:#f0f0f0;border:1px solid;border-color:#fafafa #a8a8a8 #a8a8a8 #fafafa;"></div>
<div class="t" style="left:83.70px;top:412.00px;font-size:4.6px;line-height:10px;color:#333;transform:scaleX(0.853);">B6</div>
<div style="left:92.6px;top:408.27px;width:12.10px;height:12.77px;background:#f0f0f0;border:1px solid;border-color:#fafafa #a8a8a8 #a8a8a8 #fafafa;"></div>
<div class="t" style="left:96.30px;top:412.00px;font-size:4.6px;line-height:10px;color:#333;transform:scaleX(0.853);">B7</div>
<div style="left:105.2px;top:408.27px;width:12.10px;height:12.77px;background:#f0f0f0;border:1px solid;border-color:#fafafa #a8a8a8 #a8a8a8 #fafafa;"></div>
<div class="t" style="left:108.90px;top:412.00px;font-size:4.6px;line-height:10px;color:#333;transform:scaleX(0.853);">B8</div>
<div style="left:117.8px;top:408.27px;width:12.10px;height:12.77px;background:#f0f0f0;border:1px solid;border-color:#fafafa #a8a8a8 #a8a8a8 #fafafa;"></div>
<div class="t" style="left:121.50px;top:412.00px;font-size:4.6px;line-height:10px;color:#333;transform:scaleX(0.853);">B9</div>
<div style="left:130.39999999999998px;top:408.27px;width:12.10px;height:12.77px;background:#f0f0f0;border:1px solid;border-color:#fafafa #a8a8a8 #a8a8a8 #fafafa;"></div>
<div class="t" style="left:133.25px;top:412.00px;font-size:4.6px;line-height:10px;color:#333;transform:scaleX(0.794);">B10</div>
<div style="left:143.0px;top:408.27px;width:12.10px;height:12.77px;background:#f0f0f0;border:1px solid;border-color:#fafafa #a8a8a8 #a8a8a8 #fafafa;"></div>
<div class="t" style="left:145.85px;top:412.00px;font-size:4.6px;line-height:10px;color:#333;transform:scaleX(0.829);">B11</div>
<div style="left:155.6px;top:408.27px;width:12.10px;height:12.77px;background:#f0f0f0;border:1px solid;border-color:#fafafa #a8a8a8 #a8a8a8 #fafafa;"></div>
<div class="t" style="left:158.45px;top:412.00px;font-size:4.6px;line-height:10px;color:#333;transform:scaleX(0.794);">B12</div>
<div style="left:7.5px;top:421.04px;width:9.00px;height:13.27px;background:#f0f0f0;border-bottom:1px solid #303030;border-right:0.6px solid #c8c8c8;"></div>
<div class="t" style="left:10.27px;top:425.00px;font-size:4.8px;line-height:10px;color:#333;">C</div>
<div style="left:17.0px;top:421.54px;width:12.10px;height:12.77px;background:#f0f0f0;border:1px solid;border-color:#fafafa #a8a8a8 #a8a8a8 #fafafa;"></div>
<div class="t" style="left:20.70px;top:425.00px;font-size:4.6px;line-height:10px;color:#333;transform:scaleX(0.816);">C1</div>
<div style="left:29.6px;top:421.54px;width:12.10px;height:12.77px;background:#f0f0f0;border:1px solid;border-color:#fafafa #a8a8a8 #a8a8a8 #fafafa;"></div>
<div class="t" style="left:33.30px;top:425.00px;font-size:4.6px;line-height:10px;color:#333;transform:scaleX(0.816);">C2</div>
<div style="left:42.2px;top:421.54px;width:12.10px;height:12.77px;background:#f0f0f0;border:1px solid;border-color:#fafafa #a8a8a8 #a8a8a8 #fafafa;"></div>
<div class="t" style="left:45.90px;top:425.00px;font-size:4.6px;line-height:10px;color:#333;transform:scaleX(0.816);">C3</div>
<div style="left:54.8px;top:421.54px;width:12.10px;height:12.77px;background:#f0f0f0;border:1px solid;border-color:#fafafa #a8a8a8 #a8a8a8 #fafafa;"></div>
<div class="t" style="left:58.50px;top:425.00px;font-size:4.6px;line-height:10px;color:#333;transform:scaleX(0.816);">C4</div>
<div style="left:67.4px;top:421.54px;width:12.10px;height:12.77px;background:#f0f0f0;border:1px solid;border-color:#fafafa #a8a8a8 #a8a8a8 #fafafa;"></div>
<div class="t" style="left:71.10px;top:425.00px;font-size:4.6px;line-height:10px;color:#333;transform:scaleX(0.816);">C5</div>
<div style="left:80.0px;top:421.54px;width:12.10px;height:12.77px;background:#f0f0f0;border:1px solid;border-color:#fafafa #a8a8a8 #a8a8a8 #fafafa;"></div>
<div class="t" style="left:83.70px;top:425.00px;font-size:4.6px;line-height:10px;color:#333;transform:scaleX(0.816);">C6</div>
<div style="left:92.6px;top:421.54px;width:12.10px;height:12.77px;background:#f0f0f0;border:1px solid;border-color:#fafafa #a8a8a8 #a8a8a8 #fafafa;"></div>
<div class="t" style="left:96.30px;top:425.00px;font-size:4.6px;line-height:10px;color:#333;transform:scaleX(0.816);">C7</div>
<div style="left:105.2px;top:421.54px;width:12.10px;height:12.77px;background:#f0f0f0;border:1px solid;border-color:#fafafa #a8a8a8 #a8a8a8 #fafafa;"></div>
<div class="t" style="left:108.90px;top:425.00px;font-size:4.6px;line-height:10px;color:#333;transform:scaleX(0.816);">C8</div>
<div style="left:117.8px;top:421.54px;width:12.10px;height:12.77px;background:#f0f0f0;border:1px solid;border-color:#fafafa #a8a8a8 #a8a8a8 #fafafa;"></div>
<div class="t" style="left:121.50px;top:425.00px;font-size:4.6px;line-height:10px;color:#333;transform:scaleX(0.816);">C9</div>
<div style="left:130.39999999999998px;top:421.54px;width:12.10px;height:12.77px;background:#f0f0f0;border:1px solid;border-color:#fafafa #a8a8a8 #a8a8a8 #fafafa;"></div>
<div class="t" style="left:133.25px;top:425.00px;font-size:4.6px;line-height:10px;color:#333;transform:scaleX(0.770);">C10</div>
<div style="left:143.0px;top:421.54px;width:12.10px;height:12.77px;background:#f0f0f0;border:1px solid;border-color:#fafafa #a8a8a8 #a8a8a8 #fafafa;"></div>
<div class="t" style="left:145.85px;top:425.00px;font-size:4.6px;line-height:10px;color:#333;transform:scaleX(0.803);">C11</div>
<div style="left:155.6px;top:421.54px;width:12.10px;height:12.77px;background:#f0f0f0;border:1px solid;border-color:#fafafa #a8a8a8 #a8a8a8 #fafafa;"></div>
<div class="t" style="left:158.45px;top:425.00px;font-size:4.6px;line-height:10px;color:#333;transform:scaleX(0.770);">C12</div>
<div style="left:7.5px;top:434.31px;width:9.00px;height:13.27px;background:#f0f0f0;border-bottom:1px solid #a8a8a8;border-right:0.6px solid #c8c8c8;"></div>
<div class="t" style="left:10.27px;top:438.00px;font-size:4.8px;line-height:10px;color:#333;">D</div>
<div style="left:17.0px;top:434.81px;width:12.10px;height:12.77px;background:#f0f0f0;border:1px solid;border-color:#fafafa #a8a8a8 #a8a8a8 #fafafa;"></div>
<div class="t" style="left:20.70px;top:438.00px;font-size:4.6px;line-height:10px;color:#333;transform:scaleX(0.816);">D1</div>
<div style="left:29.6px;top:434.81px;width:12.10px;height:12.77px;background:#f0f0f0;border:1px solid;border-color:#fafafa #a8a8a8 #a8a8a8 #fafafa;"></div>
<div class="t" style="left:33.30px;top:438.00px;font-size:4.6px;line-height:10px;color:#333;transform:scaleX(0.816);">D2</div>
<div style="left:42.2px;top:434.81px;width:12.10px;height:12.77px;background:#f0f0f0;border:1px solid;border-color:#fafafa #a8a8a8 #a8a8a8 #fafafa;"></div>
<div class="t" style="left:45.90px;top:438.00px;font-size:4.6px;line-height:10px;color:#333;transform:scaleX(0.816);">D3</div>
<div style="left:54.8px;top:434.81px;width:12.10px;height:12.77px;background:#f0f0f0;border:1px solid;border-color:#fafafa #a8a8a8 #a8a8a8 #fafafa;"></div>
<div class="t" style="left:58.50px;top:438.00px;font-size:4.6px;line-height:10px;color:#333;transform:scaleX(0.816);">D4</div>
<div style="left:67.4px;top:434.81px;width:12.10px;height:12.77px;background:#f0f0f0;border:1px solid;border-color:#fafafa #a8a8a8 #a8a8a8 #fafafa;"></div>
<div class="t" style="left:71.10px;top:438.00px;font-size:4.6px;line-height:10px;color:#333;transform:scaleX(0.816);">D5</div>
<div style="left:80.0px;top:434.81px;width:12.10px;height:12.77px;background:#f0f0f0;border:1px solid;border-color:#fafafa #a8a8a8 #a8a8a8 #fafafa;"></div>
<div class="t" style="left:83.70px;top:438.00px;font-size:4.6px;line-height:10px;color:#333;transform:scaleX(0.816);">D6</div>
<div style="left:92.6px;top:434.81px;width:12.10px;height:12.77px;background:#f0f0f0;border:1px solid;border-color:#fafafa #a8a8a8 #a8a8a8 #fafafa;"></div>
<div class="t" style="left:96.30px;top:438.00px;font-size:4.6px;line-height:10px;color:#333;transform:scaleX(0.816);">D7</div>
<div style="left:105.2px;top:434.81px;width:12.10px;height:12.77px;background:#f0f0f0;border:1px solid;border-color:#fafafa #a8a8a8 #a8a8a8 #fafafa;"></div>
<div class="t" style="left:108.90px;top:438.00px;font-size:4.6px;line-height:10px;color:#333;transform:scaleX(0.816);">D8</div>
<div style="left:117.8px;top:434.81px;width:12.10px;height:12.77px;background:#f0f0f0;border:1px solid;border-color:#fafafa #a8a8a8 #a8a8a8 #fafafa;"></div>
<div class="t" style="left:121.50px;top:438.00px;font-size:4.6px;line-height:10px;color:#333;transform:scaleX(0.816);">D9</div>
<div style="left:130.39999999999998px;top:434.81px;width:12.10px;height:12.77px;background:#f0f0f0;border:1px solid;border-color:#fafafa #a8a8a8 #a8a8a8 #fafafa;"></div>
<div class="t" style="left:133.25px;top:438.00px;font-size:4.6px;line-height:10px;color:#333;transform:scaleX(0.770);">D10</div>
<div style="left:143.0px;top:434.81px;width:12.10px;height:12.77px;background:#f0f0f0;border:1px solid;border-color:#fafafa #a8a8a8 #a8a8a8 #fafafa;"></div>
<div class="t" style="left:145.85px;top:438.00px;font-size:4.6px;line-height:10px;color:#333;transform:scaleX(0.803);">D11</div>
<div style="left:155.6px;top:434.81px;width:12.10px;height:12.77px;background:#f0f0f0;border:1px solid;border-color:#fafafa #a8a8a8 #a8a8a8 #fafafa;"></div>
<div class="t" style="left:158.45px;top:438.00px;font-size:4.6px;line-height:10px;color:#333;transform:scaleX(0.770);">D12</div>
<div style="left:7.5px;top:447.58px;width:9.00px;height:13.27px;background:#f0f0f0;border-bottom:1px solid #a8a8a8;border-right:0.6px solid #c8c8c8;"></div>
<div class="t" style="left:10.40px;top:451.00px;font-size:4.8px;line-height:10px;color:#333;">E</div>
<div style="left:17.0px;top:448.08px;width:12.10px;height:12.77px;background:#f0f0f0;border:1px solid;border-color:#fafafa #a8a8a8 #a8a8a8 #fafafa;"></div>
<div class="t" style="left:20.70px;top:451.00px;font-size:4.6px;line-height:10px;color:#333;transform:scaleX(0.853);">E1</div>
<div style="left:29.6px;top:448.08px;width:12.10px;height:12.77px;background:#f0f0f0;border:1px solid;border-color:#fafafa #a8a8a8 #a8a8a8 #fafafa;"></div>
<div class="t" style="left:33.30px;top:451.00px;font-size:4.6px;line-height:10px;color:#333;transform:scaleX(0.853);">E2</div>
<div style="left:42.2px;top:448.08px;width:12.10px;height:12.77px;background:#f0f0f0;border:1px solid;border-color:#fafafa #a8a8a8 #a8a8a8 #fafafa;"></div>
<div class="t" style="left:45.90px;top:451.00px;font-size:4.6px;line-height:10px;color:#333;transform:scaleX(0.853);">E3</div>
<div style="left:54.8px;top:448.08px;width:12.10px;height:12.77px;background:#f0f0f0;border:1px solid;border-color:#fafafa #a8a8a8 #a8a8a8 #fafafa;"></div>
<div class="t" style="left:58.50px;top:451.00px;font-size:4.6px;line-height:10px;color:#333;transform:scaleX(0.853);">E4</div>
<div style="left:67.4px;top:448.08px;width:12.10px;height:12.77px;background:#f0f0f0;border:1px solid;border-color:#fafafa #a8a8a8 #a8a8a8 #fafafa;"></div>
<div class="t" style="left:71.10px;top:451.00px;font-size:4.6px;line-height:10px;color:#333;transform:scaleX(0.853);">E5</div>
<div style="left:80.0px;top:448.08px;width:12.10px;height:12.77px;background:#f0f0f0;border:1px solid;border-color:#fafafa #a8a8a8 #a8a8a8 #fafafa;"></div>
<div class="t" style="left:83.70px;top:451.00px;font-size:4.6px;line-height:10px;color:#333;transform:scaleX(0.853);">E6</div>
<div style="left:92.6px;top:448.08px;width:12.10px;height:12.77px;background:#f0f0f0;border:1px solid;border-color:#fafafa #a8a8a8 #a8a8a8 #fafafa;"></div>
<div class="t" style="left:96.30px;top:451.00px;font-size:4.6px;line-height:10px;color:#333;transform:scaleX(0.853);">E7</div>
<div style="left:105.2px;top:448.08px;width:12.10px;height:12.77px;background:#f0f0f0;border:1px solid;border-color:#fafafa #a8a8a8 #a8a8a8 #fafafa;"></div>
<div class="t" style="left:108.90px;top:451.00px;font-size:4.6px;line-height:10px;color:#333;transform:scaleX(0.853);">E8</div>
<div style="left:117.8px;top:448.08px;width:12.10px;height:12.77px;background:#f0f0f0;border:1px solid;border-color:#fafafa #a8a8a8 #a8a8a8 #fafafa;"></div>
<div class="t" style="left:121.50px;top:451.00px;font-size:4.6px;line-height:10px;color:#333;transform:scaleX(0.853);">E9</div>
<div style="left:130.39999999999998px;top:448.08px;width:12.10px;height:12.77px;background:#f0f0f0;border:1px solid;border-color:#fafafa #a8a8a8 #a8a8a8 #fafafa;"></div>
<div class="t" style="left:133.25px;top:451.00px;font-size:4.6px;line-height:10px;color:#333;transform:scaleX(0.794);">E10</div>
<div style="left:143.0px;top:448.08px;width:12.10px;height:12.77px;background:#f0f0f0;border:1px solid;border-color:#fafafa #a8a8a8 #a8a8a8 #fafafa;"></div>
<div class="t" style="left:145.85px;top:451.00px;font-size:4.6px;line-height:10px;color:#333;transform:scaleX(0.829);">E11</div>
<div style="left:155.6px;top:448.08px;width:12.10px;height:12.77px;background:#f0f0f0;border:1px solid;border-color:#fafafa #a8a8a8 #a8a8a8 #fafafa;"></div>
<div class="t" style="left:158.45px;top:451.00px;font-size:4.6px;line-height:10px;color:#333;transform:scaleX(0.794);">E12</div>
<div style="left:7.5px;top:460.85px;width:9.00px;height:13.27px;background:#f0f0f0;border-bottom:1px solid #a8a8a8;border-right:0.6px solid #c8c8c8;"></div>
<div class="t" style="left:10.53px;top:465.00px;font-size:4.8px;line-height:10px;color:#333;">F</div>
<div style="left:17.0px;top:461.35px;width:12.10px;height:12.77px;background:#f0f0f0;border:1px solid;border-color:#fafafa #a8a8a8 #a8a8a8 #fafafa;"></div>
<div class="t" style="left:20.70px;top:465.00px;font-size:4.6px;line-height:10px;color:#333;transform:scaleX(0.894);">F1</div>
<div style="left:29.6px;top:461.35px;width:12.10px;height:12.77px;background:#f0f0f0;border:1px solid;border-color:#fafafa #a8a8a8 #a8a8a8 #fafafa;"></div>
<div class="t" style="left:33.30px;top:465.00px;font-size:4.6px;line-height:10px;color:#333;transform:scaleX(0.894);">F2</div>
<div style="left:42.2px;top:461.35px;width:12.10px;height:12.77px;background:#f0f0f0;border:1px solid;border-color:#fafafa #a8a8a8 #a8a8a8 #fafafa;"></div>
<div class="t" style="left:45.90px;top:465.00px;font-size:4.6px;line-height:10px;color:#333;transform:scaleX(0.894);">F3</div>
<div style="left:54.8px;top:461.35px;width:12.10px;height:12.77px;background:#f0f0f0;border:1px solid;border-color:#fafafa #a8a8a8 #a8a8a8 #fafafa;"></div>
<div class="t" style="left:58.50px;top:465.00px;font-size:4.6px;line-height:10px;color:#333;transform:scaleX(0.894);">F4</div>
<div style="left:67.4px;top:461.35px;width:12.10px;height:12.77px;background:#f0f0f0;border:1px solid;border-color:#fafafa #a8a8a8 #a8a8a8 #fafafa;"></div>
<div class="t" style="left:71.10px;top:465.00px;font-size:4.6px;line-height:10px;color:#333;transform:scaleX(0.894);">F5</div>
<div style="left:80.0px;top:461.35px;width:12.10px;height:12.77px;background:#f0f0f0;border:1px solid;border-color:#fafafa #a8a8a8 #a8a8a8 #fafafa;"></div>
<div class="t" style="left:83.70px;top:465.00px;font-size:4.6px;line-height:10px;color:#333;transform:scaleX(0.894);">F6</div>
<div style="left:92.6px;top:461.35px;width:12.10px;height:12.77px;background:#f0f0f0;border:1px solid;border-color:#fafafa #a8a8a8 #a8a8a8 #fafafa;"></div>
<div class="t" style="left:96.30px;top:465.00px;font-size:4.6px;line-height:10px;color:#333;transform:scaleX(0.894);">F7</div>
<div style="left:105.2px;top:461.35px;width:12.10px;height:12.77px;background:#f0f0f0;border:1px solid;border-color:#fafafa #a8a8a8 #a8a8a8 #fafafa;"></div>
<div class="t" style="left:108.90px;top:465.00px;font-size:4.6px;line-height:10px;color:#333;transform:scaleX(0.894);">F8</div>
<div style="left:117.8px;top:461.35px;width:12.10px;height:12.77px;background:#f0f0f0;border:1px solid;border-color:#fafafa #a8a8a8 #a8a8a8 #fafafa;"></div>
<div class="t" style="left:121.50px;top:465.00px;font-size:4.6px;line-height:10px;color:#333;transform:scaleX(0.894);">F9</div>
<div style="left:130.39999999999998px;top:461.35px;width:12.10px;height:12.77px;background:#f0f0f0;border:1px solid;border-color:#fafafa #a8a8a8 #a8a8a8 #fafafa;"></div>
<div class="t" style="left:133.25px;top:465.00px;font-size:4.6px;line-height:10px;color:#333;transform:scaleX(0.820);">F10</div>
<div style="left:143.0px;top:461.35px;width:12.10px;height:12.77px;background:#f0f0f0;border:1px solid;border-color:#fafafa #a8a8a8 #a8a8a8 #fafafa;"></div>
<div class="t" style="left:145.85px;top:465.00px;font-size:4.6px;line-height:10px;color:#333;transform:scaleX(0.857);">F11</div>
<div style="left:155.6px;top:461.35px;width:12.10px;height:12.77px;background:#f0f0f0;border:1px solid;border-color:#fafafa #a8a8a8 #a8a8a8 #fafafa;"></div>
<div class="t" style="left:158.45px;top:465.00px;font-size:4.6px;line-height:10px;color:#333;transform:scaleX(0.820);">F12</div>
<div style="left:7.5px;top:474.12px;width:9.00px;height:13.27px;background:#f0f0f0;border-bottom:1px solid #a8a8a8;border-right:0.6px solid #c8c8c8;"></div>
<div class="t" style="left:10.13px;top:478.00px;font-size:4.8px;line-height:10px;color:#333;">G</div>
<div style="left:17.0px;top:474.62px;width:12.10px;height:12.77px;background:#f0f0f0;border:1px solid;border-color:#fafafa #a8a8a8 #a8a8a8 #fafafa;"></div>
<div class="t" style="left:20.70px;top:478.00px;font-size:4.6px;line-height:10px;color:#333;transform:scaleX(0.782);">G1</div>
<div style="left:29.6px;top:474.62px;width:12.10px;height:12.77px;background:#f0f0f0;border:1px solid;border-color:#fafafa #a8a8a8 #a8a8a8 #fafafa;"></div>
<div class="t" style="left:33.30px;top:478.00px;font-size:4.6px;line-height:10px;color:#333;transform:scaleX(0.782);">G2</div>
<div style="left:42.2px;top:474.62px;width:12.10px;height:12.77px;background:#f0f0f0;border:1px solid;border-color:#fafafa #a8a8a8 #a8a8a8 #fafafa;"></div>
<div class="t" style="left:45.90px;top:478.00px;font-size:4.6px;line-height:10px;color:#333;transform:scaleX(0.782);">G3</div>
<div style="left:54.8px;top:474.62px;width:12.10px;height:12.77px;background:#f0f0f0;border:1px solid;border-color:#fafafa #a8a8a8 #a8a8a8 #fafafa;"></div>
<div class="t" style="left:58.50px;top:478.00px;font-size:4.6px;line-height:10px;color:#333;transform:scaleX(0.782);">G4</div>
<div style="left:67.4px;top:474.62px;width:12.10px;height:12.77px;background:#f0f0f0;border:1px solid;border-color:#fafafa #a8a8a8 #a8a8a8 #fafafa;"></div>
<div class="t" style="left:71.10px;top:478.00px;font-size:4.6px;line-height:10px;color:#333;transform:scaleX(0.782);">G5</div>
<div style="left:80.0px;top:474.62px;width:12.10px;height:12.77px;background:#f0f0f0;border:1px solid;border-color:#fafafa #a8a8a8 #a8a8a8 #fafafa;"></div>
<div class="t" style="left:83.70px;top:478.00px;font-size:4.6px;line-height:10px;color:#333;transform:scaleX(0.782);">G6</div>
<div style="left:92.6px;top:474.62px;width:12.10px;height:12.77px;background:#f0f0f0;border:1px solid;border-color:#fafafa #a8a8a8 #a8a8a8 #fafafa;"></div>
<div class="t" style="left:96.30px;top:478.00px;font-size:4.6px;line-height:10px;color:#333;transform:scaleX(0.782);">G7</div>
<div style="left:105.2px;top:474.62px;width:12.10px;height:12.77px;background:#f0f0f0;border:1px solid;border-color:#fafafa #a8a8a8 #a8a8a8 #fafafa;"></div>
<div class="t" style="left:108.90px;top:478.00px;font-size:4.6px;line-height:10px;color:#333;transform:scaleX(0.782);">G8</div>
<div style="left:117.8px;top:474.62px;width:12.10px;height:12.77px;background:#f0f0f0;border:1px solid;border-color:#fafafa #a8a8a8 #a8a8a8 #fafafa;"></div>
<div class="t" style="left:121.50px;top:478.00px;font-size:4.6px;line-height:10px;color:#333;transform:scaleX(0.782);">G9</div>
<div style="left:130.39999999999998px;top:474.62px;width:12.10px;height:12.77px;background:#f0f0f0;border:1px solid;border-color:#fafafa #a8a8a8 #a8a8a8 #fafafa;"></div>
<div class="t" style="left:133.25px;top:478.00px;font-size:4.6px;line-height:10px;color:#333;transform:scaleX(0.748);">G10</div>
<div style="left:143.0px;top:474.62px;width:12.10px;height:12.77px;background:#f0f0f0;border:1px solid;border-color:#fafafa #a8a8a8 #a8a8a8 #fafafa;"></div>
<div class="t" style="left:145.85px;top:478.00px;font-size:4.6px;line-height:10px;color:#333;transform:scaleX(0.778);">G11</div>
<div style="left:155.6px;top:474.62px;width:12.10px;height:12.77px;background:#f0f0f0;border:1px solid;border-color:#fafafa #a8a8a8 #a8a8a8 #fafafa;"></div>
<div class="t" style="left:158.45px;top:478.00px;font-size:4.6px;line-height:10px;color:#333;transform:scaleX(0.748);">G12</div>
<div style="left:7.5px;top:487.39px;width:9.00px;height:13.27px;background:#f0f0f0;border-bottom:1px solid #a8a8a8;border-right:0.6px solid #c8c8c8;"></div>
<div class="t" style="left:10.27px;top:491.00px;font-size:4.8px;line-height:10px;color:#333;">H</div>
<div style="left:17.0px;top:487.89px;width:12.10px;height:12.77px;background:#f0f0f0;border:1px solid;border-color:#fafafa #a8a8a8 #a8a8a8 #fafafa;"></div>
<div class="t" style="left:20.70px;top:491.00px;font-size:4.6px;line-height:10px;color:#333;transform:scaleX(0.816);">H1</div>
<div style="left:29.6px;top:487.89px;width:12.10px;height:12.77px;background:#f0f0f0;border:1px solid;border-color:#fafafa #a8a8a8 #a8a8a8 #fafafa;"></div>
<div class="t" style="left:33.30px;top:491.00px;font-size:4.6px;line-height:10px;color:#333;transform:scaleX(0.816);">H2</div>
<div style="left:42.2px;top:487.89px;width:12.10px;height:12.77px;background:#f0f0f0;border:1px solid;border-color:#fafafa #a8a8a8 #a8a8a8 #fafafa;"></div>
<div class="t" style="left:45.90px;top:491.00px;font-size:4.6px;line-height:10px;color:#333;transform:scaleX(0.816);">H3</div>
<div style="left:54.8px;top:487.89px;width:12.10px;height:12.77px;background:#f0f0f0;border:1px solid;border-color:#fafafa #a8a8a8 #a8a8a8 #fafafa;"></div>
<div class="t" style="left:58.50px;top:491.00px;font-size:4.6px;line-height:10px;color:#333;transform:scaleX(0.816);">H4</div>
<div style="left:67.4px;top:487.89px;width:12.10px;height:12.77px;background:#f0f0f0;border:1px solid;border-color:#fafafa #a8a8a8 #a8a8a8 #fafafa;"></div>
<div class="t" style="left:71.10px;top:491.00px;font-size:4.6px;line-height:10px;color:#333;transform:scaleX(0.816);">H5</div>
<div style="left:80.0px;top:487.89px;width:12.10px;height:12.77px;background:#f0f0f0;border:1px solid;border-color:#fafafa #a8a8a8 #a8a8a8 #fafafa;"></div>
<div class="t" style="left:83.70px;top:491.00px;font-size:4.6px;line-height:10px;color:#333;transform:scaleX(0.816);">H6</div>
<div style="left:92.6px;top:487.89px;width:12.10px;height:12.77px;background:#f0f0f0;border:1px solid;border-color:#fafafa #a8a8a8 #a8a8a8 #fafafa;"></div>
<div class="t" style="left:96.30px;top:491.00px;font-size:4.6px;line-height:10px;color:#333;transform:scaleX(0.816);">H7</div>
<div style="left:105.2px;top:487.89px;width:12.10px;height:12.77px;background:#f0f0f0;border:1px solid;border-color:#fafafa #a8a8a8 #a8a8a8 #fafafa;"></div>
<div class="t" style="left:108.90px;top:491.00px;font-size:4.6px;line-height:10px;color:#333;transform:scaleX(0.816);">H8</div>
<div style="left:117.8px;top:487.89px;width:12.10px;height:12.77px;background:#f0f0f0;border:1px solid;border-color:#fafafa #a8a8a8 #a8a8a8 #fafafa;"></div>
<div class="t" style="left:121.50px;top:491.00px;font-size:4.6px;line-height:10px;color:#333;transform:scaleX(0.816);">H9</div>
<div style="left:130.39999999999998px;top:487.89px;width:12.10px;height:12.77px;background:#f0f0f0;border:1px solid;border-color:#fafafa #a8a8a8 #a8a8a8 #fafafa;"></div>
<div class="t" style="left:133.25px;top:491.00px;font-size:4.6px;line-height:10px;color:#333;transform:scaleX(0.770);">H10</div>
<div style="left:143.0px;top:487.89px;width:12.10px;height:12.77px;background:#f0f0f0;border:1px solid;border-color:#fafafa #a8a8a8 #a8a8a8 #fafafa;"></div>
<div class="t" style="left:145.85px;top:491.00px;font-size:4.6px;line-height:10px;color:#333;transform:scaleX(0.803);">H11</div>
<div style="left:155.6px;top:487.89px;width:12.10px;height:12.77px;background:#f0f0f0;border:1px solid;border-color:#fafafa #a8a8a8 #a8a8a8 #fafafa;"></div>
<div class="t" style="left:158.45px;top:491.00px;font-size:4.6px;line-height:10px;color:#333;transform:scaleX(0.770);">H12</div>
<div style="left:167.8px;top:386.6px;width:2.20px;height:115.40px;background:#e4e4e4;"></div>
<div style="left:170.6px;top:388.8px;width:89.40px;height:79.20px;border:1px solid #dadada;"></div>
<div style="left:174px;top:386.3px;width:42.00px;height:5.00px;background:#f0f0f0;"></div>
<div class="t" style="left:175.00px;top:384.00px;font-size:5.2px;line-height:10px;color:#000;transform:scaleX(0.876);">Position Adjustment</div>
<div style="left:192px;top:402px;width:20.00px;height:9.30px;background:#ececec;border:1px solid;border-color:#fff #808080 #808080 #fff;box-shadow:0.6px 0.6px 0 #9a9a9a;"></div>
<div class="t" style="left:198.18px;top:402.00px;font-size:5.5px;line-height:10px;color:#2a2a2a;-webkit-text-stroke:0.05px #2a2a2a;">UP</div>
<div style="left:172.5px;top:414.4px;width:21.30px;height:9.40px;background:#ececec;border:1px solid #303030;box-shadow:0.6px 0.6px 0 #9a9a9a;"></div>
<div class="t" style="left:176.43px;top:414.00px;font-size:5.5px;line-height:10px;color:#2a2a2a;-webkit-text-stroke:0.05px #2a2a2a;">LEFT</div>
<div class="t" style="left:200.00px;top:414.00px;font-size:5px;line-height:10px;color:#444;transform:scaleX(0.686);">Δ1</div>
<div style="left:208.8px;top:414.4px;width:21.20px;height:9.40px;background:#ececec;border:1px solid;border-color:#fff #808080 #808080 #fff;box-shadow:0.6px 0.6px 0 #9a9a9a;"></div>
<div class="t" style="left:210.85px;top:414.00px;font-size:5.5px;line-height:10px;color:#2a2a2a;-webkit-text-stroke:0.05px #2a2a2a;">RIGHT</div>
<div style="left:192px;top:427px;width:20.00px;height:9.30px;background:#ececec;border:1px solid;border-color:#fff #808080 #808080 #fff;box-shadow:0.6px 0.6px 0 #9a9a9a;"></div>
<div class="t" style="left:193.29px;top:427.00px;font-size:5.5px;line-height:10px;color:#2a2a2a;-webkit-text-stroke:0.05px #2a2a2a;">DOWN</div>
<div style="left:231.3px;top:397px;width:26.20px;height:49.00px;border:1px solid #dadada;"></div>
<div style="left:235.5px;top:394.5px;width:10.50px;height:5.00px;background:#f0f0f0;"></div>
<div class="t" style="left:236.50px;top:392.00px;font-size:5.5px;line-height:10px;color:#000;transform:scaleX(0.751);">Step</div>
<div style="left:232.2px;top:402.5px;width:24.80px;height:8.10px;background:#fff;border:1px solid;border-color:#808080 #fff #fff #808080;"></div>
<div style="left:249.39999999999998px;top:403.0px;width:7.10px;height:7.10px;background:#e6e6e6;border:0.5px solid #b0b0b0;"></div>
<svg style="position:absolute;left:250.95px;top:405.05px" width="4" height="3" viewBox="0 0 4 3"><path d="M0 0.3 L4 0.3 L2 2.7Z" fill="#000"/></svg>
<div class="t" style="left:233.70px;top:402.00px;font-size:5.5px;line-height:10px;color:#000;">1X</div>
<div style="left:263.8px;top:388.2px;width:80.00px;height:79.80px;border:1px solid #dadada;"></div>
<div style="left:266px;top:385.7px;width:41.50px;height:5.00px;background:#f0f0f0;"></div>
<div class="t" style="left:267.00px;top:384.00px;font-size:5.4px;line-height:10px;color:#000;transform:scaleX(0.873);">Preset Plate Types</div>
<div style="left:266px;top:395px;width:75.00px;height:7.00px;background:#fff;border:1px solid;border-color:#808080 #fff #fff #808080;"></div>
<div style="left:334.5px;top:395.5px;width:6.00px;height:6.00px;background:#e6e6e6;border:0.5px solid #b0b0b0;"></div>
<svg style="position:absolute;left:335.5px;top:397.0px" width="4" height="3" viewBox="0 0 4 3"><path d="M0 0.3 L4 0.3 L2 2.7Z" fill="#000"/></svg>
<div class="t" style="left:267.50px;top:394.00px;font-size:5.5px;line-height:10px;color:#000;transform:scaleX(0.811);">96 Well FluoroSpot Demo</div>
<div class="t" style="left:172.00px;top:472.00px;font-size:5.5px;line-height:10px;color:#222;transform:scaleX(0.863);">ROI Size</div>
<div style="left:195px;top:473px;width:15.60px;height:7.60px;background:#fff;border:1px solid;border-color:#808080 #fff #fff #808080;"></div>
<div class="t" style="left:196.50px;top:473.00px;font-size:4.8px;line-height:10px;color:#000;transform:scaleX(0.874);">100</div>
<div style="left:204px;top:473.8px;width:5.80px;height:6.00px;background:#ececec;border-left:0.5px solid #aaa;"></div>
<div style="left:204px;top:476.6px;width:5.80px;height:0.50px;background:#aaa;"></div>
<svg style="position:absolute;left:0;top:0" width="1" height="1"><path d="M205.6 476 L208.2 476 L206.9 474.6Z M205.6 478 L208.2 478 L206.9 479.4Z" fill="#333"/></svg>
<div class="t" style="left:216.00px;top:472.00px;font-size:5.5px;line-height:10px;color:#333;">%</div>
<div style="left:225.6px;top:474px;width:6.90px;height:7.00px;background:#f0f0f0;border:0.5px solid;border-color:#fff #8a8a8a #8a8a8a #fff;"></div>
<svg style="position:absolute;left:0;top:0" width="1" height="1"><path d="M229.95 476.10 L229.95 478.90 L228.15 477.50Z" fill="#111"/></svg>
<div style="left:247.5px;top:474px;width:10.00px;height:7.00px;background:#f0f0f0;border:0.5px solid;border-color:#fff #8a8a8a #8a8a8a #fff;"></div>
<svg style="position:absolute;left:0;top:0" width="1" height="1"><path d="M251.60 476.10 L251.60 478.90 L253.40 477.50Z" fill="#111"/></svg>
<div style="left:265px;top:474.5px;width:4.00px;height:4.00px;background:#f0f0f0;border-top:0.6px solid #b4b4b4;border-left:0.6px solid #b4b4b4;"></div>
<svg style="position:absolute;left:265px;top:474.5px" width="4" height="4" viewBox="0 0 10 10"><path d="M2 4.8 L4.2 7.2 L8.2 2.6" stroke="#000" stroke-width="2.1" fill="none"/></svg>
<div class="t" style="left:272.00px;top:472.00px;font-size:5.5px;line-height:10px;color:#222;transform:scaleX(0.825);">AutoCenter ON</div>
<div style="left:308px;top:474.5px;width:4.00px;height:4.00px;background:#f0f0f0;border-top:0.6px solid #b4b4b4;border-left:0.6px solid #b4b4b4;"></div>
<svg style="position:absolute;left:308px;top:474.5px" width="4" height="4" viewBox="0 0 10 10"><path d="M2 4.8 L4.2 7.2 L8.2 2.6" stroke="#000" stroke-width="2.1" fill="none"/></svg>
<div class="t" style="left:315.00px;top:472.00px;font-size:5.5px;line-height:10px;color:#222;transform:scaleX(0.856);">3 Points Only</div>
<div style="left:265px;top:484px;width:4.00px;height:4.00px;background:#f0f0f0;border-top:0.6px solid #b4b4b4;border-left:0.6px solid #b4b4b4;"></div>
<div class="t" style="left:272.00px;top:481.00px;font-size:5.5px;line-height:10px;color:#b4b4b4;transform:scaleX(0.848);">Flip Horizontal (Clear Button Only)</div>
<div style="left:196px;top:493px;width:30.00px;height:8.50px;background:#ececec;border:1px solid;border-color:#fff #808080 #808080 #fff;box-shadow:0.6px 0.6px 0 #9a9a9a;"></div>
<div class="t" style="left:204.89px;top:492.00px;font-size:5.5px;line-height:10px;color:#2a2a2a;-webkit-text-stroke:0.05px #2a2a2a;">Eject</div>
<div style="left:230px;top:493px;width:30.60px;height:8.50px;background:#ececec;border:1px solid;border-color:#fff #808080 #808080 #fff;box-shadow:0.6px 0.6px 0 #9a9a9a;"></div>
<div class="t" style="left:233.80px;top:492.00px;font-size:5.5px;line-height:10px;color:#2a2a2a;transform:scaleX(0.827);-webkit-text-stroke:0.05px #2a2a2a;">Start Count</div>
<div style="left:313px;top:493px;width:32.00px;height:8.50px;background:#ececec;border:1px solid;border-color:#fff #808080 #808080 #fff;box-shadow:0.6px 0.6px 0 #9a9a9a;"></div>
<div class="t" style="left:324.42px;top:492.00px;font-size:5.5px;line-height:10px;color:#2a2a2a;-webkit-text-stroke:0.05px #2a2a2a;">Exit</div>
<div style="left:381px;top:401.5px;width:207.50px;height:88.50px;background:#c0c0c0;box-shadow:0.7px 0.7px 0 #8a8a8a;"></div>
<div style="left:381px;top:401.5px;width:207.50px;height:10.70px;background:#fff;"></div>
<div class="t" style="left:381.50px;top:402.00px;font-size:6px;line-height:10px;color:#9c9c9c;transform:scaleX(0.817);">Basic Count - Fine Tune Parameters, Advanced</div>
<div style="left:381px;top:412.2px;width:62.00px;height:5.80px;background:#a9a9a9;"></div>
<div class="t" style="left:386.00px;top:410.00px;font-size:5.5px;line-height:10px;color:#111;transform:scaleX(0.757);-webkit-text-stroke:0.14px #111;">PRE PROCESSING</div>
<div style="left:443.5px;top:412.2px;width:68.50px;height:5.80px;background:#a9a9a9;"></div>
<div class="t" style="left:445.00px;top:410.00px;font-size:5.5px;line-height:10px;color:#111;transform:scaleX(0.716);-webkit-text-stroke:0.14px #111;">COUNT</div>
<div style="left:441px;top:418px;width:2.00px;height:72.00px;border-left:0.7px solid #9a9a9a;border-right:0.7px solid #e4e4e4;"></div>
<div style="left:511px;top:412.2px;width:3.00px;height:77.80px;border-left:0.7px solid #9a9a9a;border-right:0.7px solid #e4e4e4;"></div>
<div style="left:383.2px;top:418.6px;width:18.00px;height:9.40px;background:#f0f0f0;border:1px solid;border-color:#fff #808080 #808080 #fff;box-shadow:0.6px 0.6px 0 #9a9a9a;"></div>
<div class="t" style="left:385.20px;top:418.00px;font-size:5.5px;line-height:10px;color:#000;transform:scaleX(0.751);-webkit-text-stroke:0.05px #000;">Sample</div>
<div style="left:402px;top:418.6px;width:18.50px;height:9.40px;background:#f0f0f0;border:1px solid;border-color:#fff #808080 #808080 #fff;box-shadow:0.6px 0.6px 0 #9a9a9a;"></div>
<div class="t" style="left:406.00px;top:418.00px;font-size:5.5px;line-height:10px;color:#000;transform:scaleX(0.763);-webkit-text-stroke:0.05px #000;">Small</div>
<div style="left:421.5px;top:418.6px;width:18.50px;height:9.40px;background:#f0f0f0;border:1px solid;border-color:#fff #808080 #808080 #fff;box-shadow:0.6px 0.6px 0 #9a9a9a;"></div>
<div class="t" style="left:425.50px;top:418.00px;font-size:5.5px;line-height:10px;color:#000;transform:scaleX(0.763);-webkit-text-stroke:0.05px #000;">Show</div>
<div class="t" style="left:384.00px;top:428.00px;font-size:5.5px;line-height:10px;color:#111;transform:scaleX(0.808);-webkit-text-stroke:0.14px #111;">Sensitivity</div>
<div style="left:416.5px;top:430.5px;width:5.00px;height:5.00px;background:#fff;border-top:0.6px solid #b4b4b4;border-left:0.6px solid #b4b4b4;"></div>
<div class="t" style="left:424.00px;top:428.00px;font-size:5.5px;line-height:10px;color:#111;transform:scaleX(0.761);-webkit-text-stroke:0.14px #111;">Filled</div>
<div style="left:384px;top:437px;width:37.00px;height:6.40px;background:#ececec;"></div>
<div style="left:384px;top:437px;width:6.40px;height:6.40px;background:#f0f0f0;border:0.5px solid;border-color:#fff #8a8a8a #8a8a8a #fff;"></div>
<svg style="position:absolute;left:0;top:0" width="1" height="1"><path d="M388.10 438.80 L388.10 441.60 L386.30 440.20Z" fill="#111"/></svg>
<div style="left:414.6px;top:437px;width:6.40px;height:6.40px;background:#f0f0f0;border:0.5px solid;border-color:#fff #8a8a8a #8a8a8a #fff;"></div>
<svg style="position:absolute;left:0;top:0" width="1" height="1"><path d="M416.90 438.80 L416.90 441.60 L418.70 440.20Z" fill="#111"/></svg>
<div style="left:391px;top:437px;width:21.00px;height:6.40px;background:#f0f0f0;border:0.5px solid;border-color:#fff #8a8a8a #8a8a8a #fff;"></div>
<div style="left:423px;top:437px;width:14.00px;height:6.40px;background:#fff;border:1px solid;border-color:#808080 #fff #fff #808080;"></div>
<div class="t" style="left:424.50px;top:437.00px;font-size:4.8px;line-height:10px;color:#000;-webkit-text-stroke:0.14px #000;">200</div>
<div style="left:383px;top:445px;width:58.00px;height:1.00px;border-top:0.6px solid #a8a8a8;"></div>
<div class="t" style="left:384.00px;top:444.00px;font-size:5.5px;line-height:10px;color:#111;transform:scaleX(0.828);-webkit-text-stroke:0.14px #111;">Background Balance</div>
<div style="left:384px;top:453px;width:37.00px;height:6.30px;background:#ececec;"></div>
<div style="left:384px;top:453px;width:6.30px;height:6.30px;background:#f0f0f0;border:0.5px solid;border-color:#fff #8a8a8a #8a8a8a #fff;"></div>
<svg style="position:absolute;left:0;top:0" width="1" height="1"><path d="M388.05 454.75 L388.05 457.55 L386.25 456.15Z" fill="#111"/></svg>
<div style="left:414.7px;top:453px;width:6.30px;height:6.30px;background:#f0f0f0;border:0.5px solid;border-color:#fff #8a8a8a #8a8a8a #fff;"></div>
<svg style="position:absolute;left:0;top:0" width="1" height="1"><path d="M416.95 454.75 L416.95 457.55 L418.75 456.15Z" fill="#111"/></svg>
<div style="left:392px;top:453px;width:9.00px;height:6.30px;background:#f0f0f0;border:0.5px solid;border-color:#fff #8a8a8a #8a8a8a #fff;"></div>
<div style="left:423px;top:453px;width:15.00px;height:6.30px;background:#fff;border:1px solid;border-color:#808080 #fff #fff #808080;"></div>
<div class="t" style="left:424.50px;top:453.00px;font-size:4.8px;line-height:10px;color:#000;transform:scaleX(0.874);-webkit-text-stroke:0.14px #000;">100</div>
<div style="left:383px;top:461px;width:58.00px;height:1.00px;border-top:0.6px solid #a8a8a8;"></div>
<div class="t" style="left:384.00px;top:460.00px;font-size:5.5px;line-height:10px;color:#111;transform:scaleX(0.809);-webkit-text-stroke:0.14px #111;">Diffuse Processing</div>
<div style="left:391px;top:467px;width:35.00px;height:8.00px;background:#fff;border:1px solid;border-color:#808080 #fff #fff #808080;"></div>
<div style="left:418.5px;top:467.5px;width:7.00px;height:7.00px;background:#e6e6e6;border:0.5px solid #b0b0b0;"></div>
<svg style="position:absolute;left:420.0px;top:469.5px" width="4" height="3" viewBox="0 0 4 3"><path d="M0 0.3 L4 0.3 L2 2.7Z" fill="#000"/></svg>
<div class="t" style="left:392.50px;top:466.00px;font-size:5.5px;line-height:10px;color:#000;transform:scaleX(0.800);-webkit-text-stroke:0.14px #000;">Small</div>
<div style="left:383px;top:477.5px;width:58.00px;height:1.00px;border-top:0.6px solid #a8a8a8;"></div>
<div style="left:390px;top:480px;width:5.00px;height:5.00px;background:#fff;border-top:0.6px solid #b4b4b4;border-left:0.6px solid #b4b4b4;"></div>
<div class="t" style="left:397.00px;top:478.00px;font-size:5.5px;line-height:10px;color:#111;transform:scaleX(0.756);-webkit-text-stroke:0.14px #111;">"Flare" Removal</div>
<div style="left:444px;top:418.5px;width:66.00px;height:26.00px;border:0.6px solid #a4a4a4;box-shadow:inset 0.6px 0.6px 0 #e0e0e0;"></div>
<div class="t" style="left:445.50px;top:418.00px;font-size:5.5px;line-height:10px;color:#111;transform:scaleX(0.746);-webkit-text-stroke:0.14px #111;">Minimum Spot Size:</div>
<div class="t" style="left:486.00px;top:418.00px;font-size:5.5px;line-height:10px;color:#111;transform:scaleX(0.750);-webkit-text-stroke:0.14px #111;">0.0003 mm²</div>
<div style="left:445px;top:426.5px;width:38.00px;height:5.30px;background:#f0f0f0;"></div>
<div style="left:445px;top:426.5px;width:5.30px;height:5.30px;background:#f0f0f0;border:0.5px solid;border-color:#fff #8a8a8a #8a8a8a #fff;"></div>
<svg style="position:absolute;left:0;top:0" width="1" height="1"><path d="M448.55 427.75 L448.55 430.55 L446.75 429.15Z" fill="#111"/></svg>
<div style="left:477.7px;top:426.5px;width:5.30px;height:5.30px;background:#f0f0f0;border:0.5px solid;border-color:#fff #8a8a8a #8a8a8a #fff;"></div>
<svg style="position:absolute;left:0;top:0" width="1" height="1"><path d="M479.45 427.75 L479.45 430.55 L481.25 429.15Z" fill="#111"/></svg>
<div style="left:452px;top:426.5px;width:10.00px;height:5.30px;background:#f0f0f0;border:0.5px solid;border-color:#fff #8a8a8a #8a8a8a #fff;"></div>
<div class="t" style="left:445.50px;top:431.00px;font-size:5.5px;line-height:10px;color:#111;transform:scaleX(0.744);-webkit-text-stroke:0.14px #111;">Maximum Spot Size:</div>
<div class="t" style="left:486.00px;top:431.00px;font-size:5.5px;line-height:10px;color:#111;transform:scaleX(0.750);-webkit-text-stroke:0.14px #111;">0.0035 mm²</div>
<div style="left:445px;top:439px;width:38.00px;height:5.00px;background:#f0f0f0;"></div>
<div style="left:445px;top:439px;width:5.00px;height:5.00px;background:#f0f0f0;border:0.5px solid;border-color:#fff #8a8a8a #8a8a8a #fff;"></div>
<svg style="position:absolute;left:0;top:0" width="1" height="1"><path d="M448.40 440.10 L448.40 442.90 L446.60 441.50Z" fill="#111"/></svg>
<div style="left:478px;top:439px;width:5.00px;height:5.00px;background:#f0f0f0;border:0.5px solid;border-color:#fff #8a8a8a #8a8a8a #fff;"></div>
<svg style="position:absolute;left:0;top:0" width="1" height="1"><path d="M479.60 440.10 L479.60 442.90 L481.40 441.50Z" fill="#111"/></svg>
<div style="left:452px;top:439px;width:14.00px;height:5.00px;background:#f0f0f0;border:0.5px solid;border-color:#fff #8a8a8a #8a8a8a #fff;"></div>
<div class="t" style="left:445.50px;top:446.00px;font-size:5.5px;line-height:10px;color:#111;transform:scaleX(0.769);-webkit-text-stroke:0.14px #111;">Spot Separation:</div>
<div style="left:481px;top:448px;width:6.00px;height:6.00px;background:#f0f0f0;border:0.5px solid;border-color:#fff #8a8a8a #8a8a8a #fff;"></div>
<svg style="position:absolute;left:0;top:0" width="1" height="1"><path d="M484.90 449.60 L484.90 452.40 L483.10 451.00Z" fill="#111"/></svg>
<div style="left:488px;top:448px;width:6.50px;height:6.00px;background:#f0f0f0;border:0.5px solid;border-color:#fff #8a8a8a #8a8a8a #fff;"></div>
<svg style="position:absolute;left:0;top:0" width="1" height="1"><path d="M490.35 449.60 L490.35 452.40 L492.15 451.00Z" fill="#111"/></svg>
<div style="left:497px;top:448px;width:11.00px;height:7.00px;background:#fff;border:1px solid;border-color:#808080 #fff #fff #808080;"></div>
<div class="t" style="left:498.50px;top:447.00px;font-size:5.5px;line-height:10px;color:#000;-webkit-text-stroke:0.14px #000;">2</div>
<div style="left:443px;top:457px;width:68.00px;height:1.00px;border-top:0.6px solid #a8a8a8;"></div>
<div class="t" style="left:446.00px;top:458.00px;font-size:5.5px;line-height:10px;color:#111;transform:scaleX(0.825);-webkit-text-stroke:0.14px #111;">Overdeveloped Area: Active</div>
<div style="left:445px;top:467.5px;width:25.00px;height:7.70px;background:#f0f0f0;border:1px solid;border-color:#fff #808080 #808080 #fff;box-shadow:0.6px 0.6px 0 #9a9a9a;"></div>
<div class="t" style="left:450.00px;top:466.00px;font-size:5.5px;line-height:10px;color:#000;transform:scaleX(0.755);-webkit-text-stroke:0.05px #000;">Settings</div>
<div style="left:473.5px;top:468.5px;width:5.00px;height:5.00px;background:#fff;border-top:0.6px solid #b4b4b4;border-left:0.6px solid #b4b4b4;"></div>
<div class="t" style="left:481.00px;top:466.00px;font-size:5.5px;line-height:10px;color:#111;transform:scaleX(0.780);-webkit-text-stroke:0.14px #111;">Manual Mode</div>
<div style="left:443.8px;top:480.5px;width:5.00px;height:5.00px;background:#fff;border-top:0.6px solid #b4b4b4;border-left:0.6px solid #b4b4b4;"></div>
<div class="t" style="left:451.00px;top:478.00px;font-size:5.5px;line-height:10px;color:#111;transform:scaleX(0.752);-webkit-text-stroke:0.14px #111;">Fill Holes</div>
<div style="left:472px;top:480.5px;width:5.00px;height:5.00px;background:#fff;border-top:0.6px solid #b4b4b4;border-left:0.6px solid #b4b4b4;"></div>
<div class="t" style="left:479.00px;top:478.00px;font-size:5.5px;line-height:10px;color:#111;transform:scaleX(0.804);-webkit-text-stroke:0.14px #111;">Remove Spots</div>
<div style="left:515.7px;top:417px;width:21.30px;height:10.60px;background:#f0f0f0;border:1px solid;border-color:#fff #808080 #808080 #fff;box-shadow:0.6px 0.6px 0 #9a9a9a;"></div>
<div class="t" style="left:521.10px;top:417.00px;font-size:5.5px;line-height:10px;color:#000;transform:scaleX(0.715);-webkit-text-stroke:0.05px #000;">Count</div>
<div style="left:540px;top:417.5px;width:5.00px;height:5.00px;background:#fff;border-top:0.6px solid #b4b4b4;border-left:0.6px solid #b4b4b4;"></div>
<div class="t" style="left:547.00px;top:415.00px;font-size:5.5px;line-height:10px;color:#111;transform:scaleX(0.794);-webkit-text-stroke:0.14px #111;">Show Spot Flags</div>
<div style="left:540px;top:423.5px;width:5.00px;height:5.00px;background:#fff;border-top:0.6px solid #b4b4b4;border-left:0.6px solid #b4b4b4;"></div>
<svg style="position:absolute;left:540px;top:423.5px" width="5" height="5" viewBox="0 0 10 10"><path d="M2 4.8 L4.2 7.2 L8.2 2.6" stroke="#000" stroke-width="2.1" fill="none"/></svg>
<div class="t" style="left:547.00px;top:422.00px;font-size:5.5px;line-height:10px;color:#111;transform:scaleX(0.811);-webkit-text-stroke:0.14px #111;">Show Overlays</div>
<div style="left:515px;top:431.5px;width:5.50px;height:5.50px;background:#f0f0f0;border:0.5px solid;border-color:#fff #8a8a8a #8a8a8a #fff;"></div>
<svg style="position:absolute;left:0;top:0" width="1" height="1"><path d="M518.65 432.85 L518.65 435.65 L516.85 434.25Z" fill="#111"/></svg>
<div style="left:521.5px;top:431.5px;width:6.00px;height:5.50px;background:#f0f0f0;border:0.5px solid;border-color:#fff #8a8a8a #8a8a8a #fff;"></div>
<svg style="position:absolute;left:0;top:0" width="1" height="1"><path d="M523.60 432.85 L523.60 435.65 L525.40 434.25Z" fill="#111"/></svg>
<div style="left:530.5px;top:431px;width:11.00px;height:7.50px;background:#fff;border:1px solid;border-color:#808080 #fff #fff #808080;"></div>
<div class="t" style="left:532.00px;top:431.00px;font-size:4.8px;line-height:10px;color:#000;transform:scaleX(0.937);-webkit-text-stroke:0.14px #000;">100</div>
<div class="t" style="left:544.50px;top:429.00px;font-size:5.5px;line-height:10px;color:#111;transform:scaleX(0.772);-webkit-text-stroke:0.14px #111;">Counted/area (%)</div>
<div style="left:537.5px;top:440px;width:5.00px;height:5.00px;background:#c0c0c0;border-top:0.6px solid #b4b4b4;border-left:0.6px solid #b4b4b4;"></div>
<svg style="position:absolute;left:537.5px;top:440px" width="5" height="5" viewBox="0 0 10 10"><path d="M2 4.8 L4.2 7.2 L8.2 2.6" stroke="#000" stroke-width="2.1" fill="none"/></svg>
<div class="t" style="left:545.00px;top:438.00px;font-size:5.5px;line-height:10px;color:#111;transform:scaleX(0.777);-webkit-text-stroke:0.14px #111;">Normalize counts</div>
<div class="t" style="left:515.00px;top:444.00px;font-size:5.5px;line-height:10px;color:#111;transform:scaleX(0.791);-webkit-text-stroke:0.14px #111;">Diam. at 100%: 5.200mm  (actual)</div>
<div class="t" style="left:516.00px;top:458.00px;font-size:4.5px;line-height:10px;color:#222;transform:scaleX(0.956);-webkit-text-stroke:0.14px #222;">Spots</div>
<div style="left:529.7px;top:453.4px;width:54.60px;height:11.80px;background:#fff;"></div>
<div style="left:544.5px;top:453.4px;width:9.00px;height:11.80px;border:0.8px solid #3a3a7a;border-bottom:none;"></div>
<div class="t" style="left:529.06px;top:463.00px;font-size:5.5px;line-height:10px;color:#222;-webkit-text-stroke:0.14px #222;">-5</div>
<div class="t" style="left:537.86px;top:463.00px;font-size:5.5px;line-height:10px;color:#222;-webkit-text-stroke:0.14px #222;">-4</div>
<div class="t" style="left:546.66px;top:463.00px;font-size:5.5px;line-height:10px;color:#222;-webkit-text-stroke:0.14px #222;">-3</div>
<div class="t" style="left:555.46px;top:463.00px;font-size:5.5px;line-height:10px;color:#222;-webkit-text-stroke:0.14px #222;">-2</div>
<div class="t" style="left:564.26px;top:463.00px;font-size:5.5px;line-height:10px;color:#222;-webkit-text-stroke:0.14px #222;">-1</div>
<div class="t" style="left:573.97px;top:463.00px;font-size:5.5px;line-height:10px;color:#222;-webkit-text-stroke:0.14px #222;">0</div>
<div class="t" style="left:582.77px;top:463.00px;font-size:5.5px;line-height:10px;color:#222;-webkit-text-stroke:0.14px #222;">1</div>
<div class="t" style="left:564.00px;top:468.00px;font-size:5.5px;line-height:10px;color:#222;transform:scaleX(0.784);-webkit-text-stroke:0.14px #222;">Log mm^2</div>
<div style="left:515px;top:477px;width:30.50px;height:11.30px;background:#f0f0f0;border:1px solid;border-color:#fff #808080 #808080 #fff;box-shadow:0.6px 0.6px 0 #9a9a9a;"></div>
<div class="t" style="left:522.25px;top:478.00px;font-size:5.5px;line-height:10px;color:#000;transform:scaleX(0.774);-webkit-text-stroke:0.05px #000;">GATING</div>
<div style="left:549px;top:477px;width:31.00px;height:11.30px;background:#f0f0f0;border:1px solid;border-color:#fff #808080 #808080 #fff;box-shadow:0.6px 0.6px 0 #9a9a9a;"></div>
<div class="t" style="left:558.00px;top:478.00px;font-size:5.5px;line-height:10px;color:#000;transform:scaleX(0.868);-webkit-text-stroke:0.05px #000;">BACK</div>
<div style="left:592.3px;top:75.2px;width:100.70px;height:127.80px;background:#c0c0c0;box-shadow:0.7px 0.7px 0 #8a8a8a;border-left:0.6px solid #e8e8e8;"></div>
<div style="left:592.3px;top:75.2px;width:100.70px;height:10.80px;background:#fff;border-top:0.6px solid #d4d4d4;"></div>
<div style="left:594.5px;top:76.7px;width:7.00px;height:6.30px;background:#8080b0;border:0.6px solid #555;"></div>
<div style="left:595.5px;top:80px;width:5.00px;height:2.70px;background:#c8c8c8;"></div>
<div class="t" style="left:603.00px;top:76.00px;font-size:5.5px;line-height:10px;color:#a8a8a8;transform:scaleX(0.980);">Filter Changer Control</div>
<div class="t" style="left:685.50px;top:76.00px;font-size:5.5px;line-height:10px;color:#888;">✕</div>
<div style="left:599px;top:92.5px;width:33.00px;height:99.80px;border:1px solid #dadada;"></div>
<div style="left:605px;top:90.0px;width:17.00px;height:5.00px;background:#c0c0c0;"></div>
<div class="t" style="left:606.00px;top:88.00px;font-size:5.5px;line-height:10px;color:#000;transform:scaleX(0.779);-webkit-text-stroke:0.14px #000;">Filter ID</div>
<div style="left:655.7px;top:92.5px;width:32.00px;height:99.80px;border:1px solid #dadada;"></div>
<div style="left:657px;top:90.0px;width:24.00px;height:5.00px;background:#c0c0c0;"></div>
<div class="t" style="left:658.00px;top:88.00px;font-size:5.5px;line-height:10px;color:#000;transform:scaleX(0.774);-webkit-text-stroke:0.14px #000;">Filter Name</div>
<div style="left:602.5px;top:98.1px;width:5.00px;height:5.00px;background:#fff;border-radius:50%;border-top:0.6px solid #b4b4b4;border-left:0.6px solid #b4b4b4;"></div>
<div style="left:604.0px;top:99.89999999999999px;width:2.00px;height:1.40px;background:#000;border-radius:50%;"></div>
<div style="left:613.4px;top:98.1px;width:5.00px;height:5.00px;background:#fff;border-top:0.6px solid #b4b4b4;border-left:0.6px solid #b4b4b4;"></div>
<div class="t" style="left:622.60px;top:96.00px;font-size:6px;line-height:10px;color:#111;transform:scaleX(0.779);-webkit-text-stroke:0.05px #111;">1</div>
<div style="left:658.4px;top:96.0px;width:25.60px;height:7.90px;background:#c0c0c0;border:1px solid;border-color:#808080 #fff #fff #808080;"></div>
<div class="t" style="left:659.90px;top:95.00px;font-size:5.5px;line-height:10px;color:#9a9a9a;">445</div>
<div style="left:602.5px;top:108.89999999999999px;width:5.00px;height:5.00px;background:#fff;border-radius:50%;border-top:0.6px solid #b4b4b4;border-left:0.6px solid #b4b4b4;"></div>
<div style="left:613.4px;top:108.89999999999999px;width:5.00px;height:5.00px;background:#fff;border-top:0.6px solid #b4b4b4;border-left:0.6px solid #b4b4b4;"></div>
<div class="t" style="left:622.60px;top:106.00px;font-size:6px;line-height:10px;color:#111;transform:scaleX(0.779);-webkit-text-stroke:0.05px #111;">2</div>
<div style="left:658.4px;top:106.8px;width:25.60px;height:7.90px;background:#c0c0c0;border:1px solid;border-color:#808080 #fff #fff #808080;"></div>
<div class="t" style="left:659.90px;top:106.00px;font-size:5.5px;line-height:10px;color:#9a9a9a;">520</div>
<div style="left:602.5px;top:119.69999999999999px;width:5.00px;height:5.00px;background:#fff;border-radius:50%;border-top:0.6px solid #b4b4b4;border-left:0.6px solid #b4b4b4;"></div>
<div style="left:613.4px;top:119.69999999999999px;width:5.00px;height:5.00px;background:#fff;border-top:0.6px solid #b4b4b4;border-left:0.6px solid #b4b4b4;"></div>
<div class="t" style="left:622.60px;top:117.00px;font-size:6px;line-height:10px;color:#111;transform:scaleX(0.779);-webkit-text-stroke:0.05px #111;">3</div>
<div style="left:658.4px;top:117.6px;width:25.60px;height:7.90px;background:#c0c0c0;border:1px solid;border-color:#808080 #fff #fff #808080;"></div>
<div class="t" style="left:659.90px;top:117.00px;font-size:5.5px;line-height:10px;color:#9a9a9a;">600</div>
<div style="left:602.5px;top:130.5px;width:5.00px;height:5.00px;background:#fff;border-radius:50%;border-top:0.6px solid #b4b4b4;border-left:0.6px solid #b4b4b4;"></div>
<div style="left:613.4px;top:130.5px;width:5.00px;height:5.00px;background:#fff;border-top:0.6px solid #b4b4b4;border-left:0.6px solid #b4b4b4;"></div>
<div class="t" style="left:622.60px;top:128.00px;font-size:6px;line-height:10px;color:#111;transform:scaleX(0.779);-webkit-text-stroke:0.05px #111;">4</div>
<div style="left:658.4px;top:128.4px;width:25.60px;height:7.90px;background:#c0c0c0;border:1px solid;border-color:#808080 #fff #fff #808080;"></div>
<div class="t" style="left:659.90px;top:128.00px;font-size:5.5px;line-height:10px;color:#9a9a9a;">675</div>
<div style="left:602.5px;top:141.3px;width:5.00px;height:5.00px;background:#fff;border-radius:50%;border-top:0.6px solid #b4b4b4;border-left:0.6px solid #b4b4b4;"></div>
<div style="left:613.4px;top:141.3px;width:5.00px;height:5.00px;background:#fff;border-top:0.6px solid #b4b4b4;border-left:0.6px solid #b4b4b4;"></div>
<div class="t" style="left:622.60px;top:139.00px;font-size:6px;line-height:10px;color:#111;transform:scaleX(0.779);-webkit-text-stroke:0.05px #111;">5</div>
<div style="left:658.4px;top:139.20000000000002px;width:25.60px;height:7.90px;background:#c0c0c0;border:1px solid;border-color:#808080 #fff #fff #808080;"></div>
<div class="t" style="left:659.90px;top:139.00px;font-size:5.5px;line-height:10px;color:#9a9a9a;">690</div>
<div style="left:602.5px;top:152.1px;width:5.00px;height:5.00px;background:#fff;border-radius:50%;border-top:0.6px solid #b4b4b4;border-left:0.6px solid #b4b4b4;"></div>
<div style="left:613.4px;top:152.1px;width:5.00px;height:5.00px;background:#fff;border-top:0.6px solid #b4b4b4;border-left:0.6px solid #b4b4b4;"></div>
<div class="t" style="left:622.60px;top:150.00px;font-size:6px;line-height:10px;color:#111;transform:scaleX(0.779);-webkit-text-stroke:0.05px #111;">6</div>
<div style="left:658.4px;top:150.0px;width:25.60px;height:7.90px;background:#c0c0c0;border:1px solid;border-color:#808080 #fff #fff #808080;"></div>
<div class="t" style="left:659.90px;top:149.00px;font-size:5.5px;line-height:10px;color:#9a9a9a;">800</div>
<div style="left:602.5px;top:162.9px;width:5.00px;height:5.00px;background:#fff;border-radius:50%;border-top:0.6px solid #b4b4b4;border-left:0.6px solid #b4b4b4;"></div>
<div style="left:613.4px;top:162.9px;width:5.00px;height:5.00px;background:#fff;border-top:0.6px solid #b4b4b4;border-left:0.6px solid #b4b4b4;"></div>
<div class="t" style="left:622.60px;top:160.00px;font-size:6px;line-height:10px;color:#111;transform:scaleX(0.779);-webkit-text-stroke:0.05px #111;">7</div>
<div style="left:658.4px;top:160.8px;width:25.60px;height:7.90px;background:#c0c0c0;border:1px solid;border-color:#808080 #fff #fff #808080;"></div>
<div class="t" style="left:659.90px;top:160.00px;font-size:5.5px;line-height:10px;color:#9a9a9a;">Empty1</div>
<div style="left:602.5px;top:173.7px;width:5.00px;height:5.00px;background:#fff;border-radius:50%;border-top:0.6px solid #b4b4b4;border-left:0.6px solid #b4b4b4;"></div>
<div style="left:613.4px;top:173.7px;width:5.00px;height:5.00px;background:#fff;border-top:0.6px solid #b4b4b4;border-left:0.6px solid #b4b4b4;"></div>
<div class="t" style="left:622.60px;top:171.00px;font-size:6px;line-height:10px;color:#111;transform:scaleX(0.779);-webkit-text-stroke:0.05px #111;">8</div>
<div style="left:658.4px;top:171.6px;width:25.60px;height:7.90px;background:#c0c0c0;border:1px solid;border-color:#808080 #fff #fff #808080;"></div>
<div class="t" style="left:659.90px;top:171.00px;font-size:5.5px;line-height:10px;color:#9a9a9a;">ELISPOT</div>
<div style="left:602.5px;top:184.5px;width:5.00px;height:5.00px;background:#fff;border-radius:50%;border-top:0.6px solid #b4b4b4;border-left:0.6px solid #b4b4b4;"></div>
<div style="left:613.4px;top:184.5px;width:5.00px;height:5.00px;background:#fff;border-top:0.6px solid #b4b4b4;border-left:0.6px solid #b4b4b4;"></div>
<div class="t" style="left:622.60px;top:182.00px;font-size:6px;line-height:10px;color:#111;transform:scaleX(0.779);-webkit-text-stroke:0.05px #111;">9</div>
<div style="left:658.4px;top:182.4px;width:25.60px;height:7.90px;background:#c0c0c0;border:1px solid;border-color:#808080 #fff #fff #808080;"></div>
<div class="t" style="left:659.90px;top:182.00px;font-size:5.5px;line-height:10px;color:#9a9a9a;">Empty2</div>
<div style="left:633px;top:119px;width:18.50px;height:12.00px;background:#f0f0f0;border:1px solid;border-color:#fff #808080 #808080 #fff;box-shadow:0.6px 0.6px 0 #9a9a9a;"></div>
<div class="t" style="left:638.73px;top:120.00px;font-size:5.5px;line-height:10px;color:#000;-webkit-text-stroke:0.05px #000;">Up</div>
<div style="left:633px;top:137px;width:18.50px;height:12.40px;background:#f0f0f0;border:1px solid;border-color:#fff #808080 #808080 #fff;box-shadow:0.6px 0.6px 0 #9a9a9a;"></div>
<div class="t" style="left:636.25px;top:138.00px;font-size:5.5px;line-height:10px;color:#000;transform:scaleX(0.853);-webkit-text-stroke:0.05px #000;">Down</div>
<div style="left:592.7px;top:210.3px;width:100.30px;height:151.50px;background:#c0c0c0;box-shadow:0.7px 0.7px 0 #8a8a8a;border-left:0.6px solid #e8e8e8;"></div>
<div style="left:592.7px;top:210.3px;width:100.30px;height:10.70px;background:#fff;"></div>
<div class="t" style="left:595.00px;top:211.00px;font-size:5.5px;line-height:10px;color:#a8a8a8;transform:scaleX(0.884);">Lens Controls</div>
<div style="left:596px;top:225.5px;width:44.50px;height:132.00px;border:1px solid #dadada;"></div>
<div style="left:598px;top:223.0px;width:14.00px;height:5.00px;background:#c0c0c0;"></div>
<div class="t" style="left:599.00px;top:221.00px;font-size:5.5px;line-height:10px;color:#000;transform:scaleX(0.801);-webkit-text-stroke:0.14px #000;">Focus</div>
<div style="left:600px;top:231px;width:6.70px;height:124.00px;background:#f4f4f4;"></div>
<div style="left:600px;top:231px;width:6.70px;height:5.50px;background:#f0f0f0;border:0.5px solid;border-color:#fff #8a8a8a #8a8a8a #fff;"></div>
<svg style="position:absolute;left:0;top:0" width="1" height="1"><path d="M601.95 234.55 L604.75 234.55 L603.35 232.85Z" fill="#111"/></svg>
<div style="left:600px;top:349.5px;width:6.70px;height:5.50px;background:#f0f0f0;border:0.5px solid;border-color:#fff #8a8a8a #8a8a8a #fff;"></div>
<svg style="position:absolute;left:0;top:0" width="1" height="1"><path d="M601.95 351.45 L604.75 351.45 L603.35 353.15Z" fill="#111"/></svg>
<div style="left:600.2px;top:277px;width:6.30px;height:10.40px;background:#ececec;border:0.6px solid;border-color:#fff #8a8a8a #8a8a8a #fff;"></div>
<div class="t" style="left:612.00px;top:236.00px;font-size:5.5px;line-height:10px;color:#111;transform:scaleX(0.767);-webkit-text-stroke:0.14px #111;">Position</div>
<div style="left:611.5px;top:247px;width:23.50px;height:8.00px;background:#fff;border:1px solid;border-color:#808080 #fff #fff #808080;"></div>
<div class="t" style="left:613.00px;top:246.00px;font-size:5.5px;line-height:10px;color:#000;transform:scaleX(0.736);-webkit-text-stroke:0.14px #000;">4584</div>
<div style="left:611.5px;top:258.3px;width:23.50px;height:8.00px;background:#fff;border:1px solid;border-color:#808080 #fff #fff #808080;"></div>
<div class="t" style="left:613.00px;top:258.00px;font-size:5.5px;line-height:10px;color:#000;transform:scaleX(0.736);-webkit-text-stroke:0.14px #000;">4584</div>
<div class="t" style="left:613.00px;top:274.00px;font-size:5.5px;line-height:10px;color:#111;transform:scaleX(1.049);-webkit-text-stroke:0.14px #111;">Range</div>
<div style="left:613.5px;top:282.7px;width:17.00px;height:7.90px;background:#fff;border:1px solid;border-color:#808080 #fff #fff #808080;"></div>
<div class="t" style="left:615.00px;top:282.00px;font-size:5.5px;line-height:10px;color:#000;transform:scaleX(0.736);-webkit-text-stroke:0.14px #000;">2000</div>
<div class="t" style="left:613.00px;top:295.00px;font-size:5.5px;line-height:10px;color:#111;transform:scaleX(0.840);-webkit-text-stroke:0.14px #111;">Precision</div>
<div style="left:613.5px;top:304px;width:17.00px;height:8.00px;background:#fff;border:1px solid;border-color:#808080 #fff #fff #808080;"></div>
<div class="t" style="left:615.00px;top:304.00px;font-size:5.5px;line-height:10px;color:#000;-webkit-text-stroke:0.14px #000;">10</div>
<div style="left:612px;top:320.5px;width:4.50px;height:4.50px;background:#fff;border-top:0.6px solid #b4b4b4;border-left:0.6px solid #b4b4b4;"></div>
<div class="t" style="left:618.00px;top:318.00px;font-size:5.5px;line-height:10px;color:#111;transform:scaleX(0.806);-webkit-text-stroke:0.14px #111;">Auto ON</div>
<div style="left:612px;top:332px;width:4.50px;height:4.50px;background:#fff;border-top:0.6px solid #b4b4b4;border-left:0.6px solid #b4b4b4;"></div>
<div class="t" style="left:618.00px;top:329.00px;font-size:5.5px;line-height:10px;color:#111;transform:scaleX(0.826);-webkit-text-stroke:0.14px #111;">ALL ON</div>
<div style="left:610.6px;top:346.7px;width:25.40px;height:8.70px;background:#f0f0f0;border:1px solid;border-color:#fff #808080 #808080 #fff;box-shadow:0.6px 0.6px 0 #9a9a9a;"></div>
<div class="t" style="left:613.30px;top:346.00px;font-size:5.5px;line-height:10px;color:#000;transform:scaleX(0.779);-webkit-text-stroke:0.05px #000;">FindFocus</div>
<div style="left:643.5px;top:225.5px;width:46.50px;height:132.00px;border:1px solid #dadada;"></div>
<div style="left:644px;top:223.0px;width:13.00px;height:5.00px;background:#c0c0c0;"></div>
<div class="t" style="left:645.00px;top:221.00px;font-size:5.5px;line-height:10px;color:#000;transform:scaleX(0.782);-webkit-text-stroke:0.14px #000;">Zoom</div>
<div style="left:644.5px;top:231px;width:6.50px;height:124.00px;background:#f4f4f4;"></div>
<div style="left:644.5px;top:231px;width:6.50px;height:5.50px;background:#f0f0f0;border:0.5px solid;border-color:#fff #8a8a8a #8a8a8a #fff;"></div>
<svg style="position:absolute;left:0;top:0" width="1" height="1"><path d="M646.35 234.55 L649.15 234.55 L647.75 232.85Z" fill="#111"/></svg>
<div style="left:644.5px;top:349.5px;width:6.50px;height:5.50px;background:#f0f0f0;border:0.5px solid;border-color:#fff #8a8a8a #8a8a8a #fff;"></div>
<svg style="position:absolute;left:0;top:0" width="1" height="1"><path d="M646.35 351.45 L649.15 351.45 L647.75 353.15Z" fill="#111"/></svg>
<div style="left:644.7px;top:272px;width:6.10px;height:5.70px;background:#ececec;border:0.6px solid;border-color:#fff #8a8a8a #8a8a8a #fff;"></div>
<div style="left:658px;top:231px;width:16.70px;height:7.50px;background:#fff;border:1px solid;border-color:#808080 #fff #fff #808080;"></div>
<div class="t" style="left:659.50px;top:230.00px;font-size:5.5px;line-height:10px;color:#000;transform:scaleX(0.832);-webkit-text-stroke:0.14px #000;">1.9499</div>
<div class="t" style="left:677.00px;top:230.00px;font-size:5.5px;line-height:10px;color:#555;">X</div>
<div style="left:654px;top:246px;width:34.00px;height:28.00px;border:1px solid #dadada;"></div>
<div style="left:657px;top:243.5px;width:26.00px;height:5.00px;background:#c0c0c0;"></div>
<div class="t" style="left:658.00px;top:241.00px;font-size:5.5px;line-height:10px;color:#000;transform:scaleX(0.762);-webkit-text-stroke:0.14px #000;">Preset Zoom</div>
<div style="left:659.2px;top:252.8px;width:5.00px;height:5.00px;background:#fff;border-radius:50%;border-top:0.6px solid #b4b4b4;border-left:0.6px solid #b4b4b4;"></div>
<div style="left:660.7px;top:254.60000000000002px;width:2.00px;height:1.40px;background:#000;border-radius:50%;"></div>
<div class="t" style="left:665.00px;top:250.00px;font-size:5.5px;line-height:10px;color:#111;transform:scaleX(0.877);-webkit-text-stroke:0.14px #111;">96 Well</div>
<div style="left:658.7px;top:262.3px;width:24.00px;height:8.70px;background:#f0f0f0;border:1px solid;border-color:#fff #808080 #808080 #fff;box-shadow:0.6px 0.6px 0 #9a9a9a;"></div>
<div class="t" style="left:663.70px;top:262.00px;font-size:5.5px;line-height:10px;color:#000;transform:scaleX(0.803);-webkit-text-stroke:0.05px #000;">Default</div>
<div style="left:654px;top:280.5px;width:34.00px;height:63.50px;border:1px solid #dadada;"></div>
<div style="left:657px;top:278.0px;width:29.00px;height:5.00px;background:#c0c0c0;"></div>
<div class="t" style="left:658.00px;top:276.00px;font-size:5.5px;line-height:10px;color:#000;transform:scaleX(0.782);-webkit-text-stroke:0.14px #000;">Custom Zoom</div>
<div style="left:660.8px;top:289.0px;width:5.00px;height:5.00px;background:#fff;border-radius:50%;border-top:0.6px solid #b4b4b4;border-left:0.6px solid #b4b4b4;"></div>
<div class="t" style="left:667.00px;top:287.00px;font-size:5.5px;line-height:10px;color:#444;transform:scaleX(1.090);">1 X</div>
<div style="left:660.8px;top:299.6px;width:5.00px;height:5.00px;background:#fff;border-radius:50%;border-top:0.6px solid #b4b4b4;border-left:0.6px solid #b4b4b4;"></div>
<div class="t" style="left:667.00px;top:297.00px;font-size:5.5px;line-height:10px;color:#444;transform:scaleX(1.090);">2 X</div>
<div style="left:660.8px;top:310.2px;width:5.00px;height:5.00px;background:#fff;border-radius:50%;border-top:0.6px solid #b4b4b4;border-left:0.6px solid #b4b4b4;"></div>
<div class="t" style="left:667.00px;top:308.00px;font-size:5.5px;line-height:10px;color:#444;transform:scaleX(1.090);">3 X</div>
<div style="left:660.8px;top:320.8px;width:5.00px;height:5.00px;background:#fff;border-radius:50%;border-top:0.6px solid #b4b4b4;border-left:0.6px solid #b4b4b4;"></div>
<div class="t" style="left:667.00px;top:318.00px;font-size:5.5px;line-height:10px;color:#444;transform:scaleX(1.090);">4 X</div>
<div style="left:659px;top:331px;width:24.00px;height:8.70px;background:#f0f0f0;border:1px solid;border-color:#fff #808080 #808080 #fff;box-shadow:0.6px 0.6px 0 #9a9a9a;"></div>
<div class="t" style="left:662.50px;top:330.00px;font-size:5.5px;line-height:10px;color:#000;transform:scaleX(0.662);-webkit-text-stroke:0.05px #000;">Name Pos</div>
<div style="left:656px;top:346.3px;width:29.30px;height:8.70px;background:#f0f0f0;border:1px solid;border-color:#fff #808080 #808080 #fff;box-shadow:0.6px 0.6px 0 #9a9a9a;"></div>
<div class="t" style="left:663.65px;top:346.00px;font-size:5.5px;line-height:10px;color:#000;transform:scaleX(0.727);-webkit-text-stroke:0.05px #000;">Set Pos</div>
<div style="left:591.6px;top:365.6px;width:102.60px;height:110.80px;background:#c0c0c0;border:1px solid #8e9aa6;border-radius:1.5px 1.5px 0 0;box-shadow:inset 1px 1px 0 #e4ecf4, inset -1px -1px 0 #e4ecf4;"></div>
<div style="left:592.5px;top:366.5px;width:101.00px;height:9.30px;background:linear-gradient(#e2ecf6,#bcd2ea);"></div>
<div class="t" style="left:595.00px;top:366.00px;font-size:6px;line-height:10px;color:#aabbcc;transform:scaleX(0.837);">Light Controls</div>
<div style="left:595px;top:382px;width:96.00px;height:17.00px;border:1px solid #dadada;"></div>
<div style="left:597px;top:379.5px;width:27.00px;height:5.00px;background:#c0c0c0;"></div>
<div class="t" style="left:598.00px;top:377.00px;font-size:5.5px;line-height:10px;color:#000;transform:scaleX(0.846);-webkit-text-stroke:0.14px #000;">Visible Light</div>
<div style="left:601px;top:389px;width:4.60px;height:4.60px;background:#e2e2e2;border-top:0.6px solid #c8c8c8;border-left:0.6px solid #c8c8c8;"></div>
<div class="t" style="left:608.00px;top:387.00px;font-size:4.5px;line-height:10px;color:#b4b4b4;transform:scaleX(0.706);">Trans</div>
<div style="left:631px;top:389px;width:4.60px;height:4.60px;background:#e2e2e2;border-top:0.6px solid #c8c8c8;border-left:0.6px solid #c8c8c8;"></div>
<div class="t" style="left:638.00px;top:387.00px;font-size:4.5px;line-height:10px;color:#b4b4b4;transform:scaleX(0.833);">Epi-trans</div>
<div style="left:658.5px;top:389px;width:4.60px;height:4.60px;background:#e2e2e2;border-top:0.6px solid #c8c8c8;border-left:0.6px solid #c8c8c8;"></div>
<div class="t" style="left:665.50px;top:387.00px;font-size:4.5px;line-height:10px;color:#b4b4b4;transform:scaleX(0.641);">Epi-Trans Red</div>
<div style="left:595px;top:408px;width:96.00px;height:65.00px;border:1px solid #dadada;"></div>
<div style="left:597px;top:405.5px;width:19.00px;height:5.00px;background:#c0c0c0;"></div>
<div class="t" style="left:598.00px;top:403.00px;font-size:5.5px;line-height:10px;color:#000;transform:scaleX(0.806);-webkit-text-stroke:0.14px #000;">UV Light</div>
<div style="left:601px;top:412.8px;width:35.00px;height:8.20px;background:#f0f0f0;border:1px solid;border-color:#fff #808080 #808080 #fff;box-shadow:0.6px 0.6px 0 #9a9a9a;"></div>
<div class="t" style="left:609.50px;top:412.00px;font-size:5.5px;line-height:10px;color:#a8a8a8;transform:scaleX(0.710);-webkit-text-stroke:0.05px #a8a8a8;">Power ON</div>
<div style="left:647.8px;top:412.8px;width:36.20px;height:8.20px;background:#f0f0f0;border:1px solid;border-color:#fff #808080 #808080 #fff;box-shadow:0.6px 0.6px 0 #9a9a9a;"></div>
<div class="t" style="left:650.40px;top:412.00px;font-size:5.5px;line-height:10px;color:#000;transform:scaleX(0.798);-webkit-text-stroke:0.05px #000;">Shutter Opened</div>
<div style="left:600.4px;top:431.5px;width:35.60px;height:9.50px;background:#f0f0f0;border:1px solid;border-color:#fff #808080 #808080 #fff;box-shadow:0.6px 0.6px 0 #9a9a9a;"></div>
<div class="t" style="left:607.20px;top:431.00px;font-size:5.5px;line-height:10px;color:#000;transform:scaleX(0.783);-webkit-text-stroke:0.05px #000;">Power OFF</div>
<div style="left:647px;top:431.5px;width:37.00px;height:9.50px;background:#f0f0f0;border:1px solid;border-color:#fff #808080 #808080 #fff;box-shadow:0.6px 0.6px 0 #9a9a9a;"></div>
<div class="t" style="left:651.50px;top:431.00px;font-size:5.5px;line-height:10px;color:#a8a8a8;transform:scaleX(0.770);-webkit-text-stroke:0.05px #a8a8a8;">Shutter Closed</div>
<div style="left:598px;top:448.5px;width:91.00px;height:22.50px;border:1px solid #dadada;"></div>
<div class="t" style="left:601.00px;top:442.00px;font-size:5.5px;line-height:10px;color:#111;transform:scaleX(0.814);-webkit-text-stroke:0.14px #111;">Excitation band selector (nm)</div>
<div style="left:602.7px;top:456.5px;width:5.00px;height:5.00px;background:#fff;border-top:0.6px solid #b4b4b4;border-left:0.6px solid #b4b4b4;"></div>
<svg style="position:absolute;left:602.7px;top:456.5px" width="5" height="5" viewBox="0 0 10 10"><path d="M2 4.8 L4.2 7.2 L8.2 2.6" stroke="#000" stroke-width="2.1" fill="none"/></svg>
<div class="t" style="left:610.00px;top:454.00px;font-size:5.5px;line-height:10px;color:#222;transform:scaleX(0.872);-webkit-text-stroke:0.14px #222;">405</div>
<div style="left:624.7px;top:456.5px;width:5.00px;height:5.00px;background:#fff;border-top:0.6px solid #b4b4b4;border-left:0.6px solid #b4b4b4;"></div>
<div class="t" style="left:632.00px;top:454.00px;font-size:5.5px;line-height:10px;color:#222;transform:scaleX(0.872);-webkit-text-stroke:0.14px #222;">480</div>
<div style="left:647.7px;top:456.5px;width:5.00px;height:5.00px;background:#fff;border-top:0.6px solid #b4b4b4;border-left:0.6px solid #b4b4b4;"></div>
<div class="t" style="left:655.00px;top:454.00px;font-size:5.5px;line-height:10px;color:#222;transform:scaleX(0.872);-webkit-text-stroke:0.14px #222;">570</div>
<div style="left:669.7px;top:456.5px;width:5.00px;height:5.00px;background:#fff;border-top:0.6px solid #b4b4b4;border-left:0.6px solid #b4b4b4;"></div>
<div class="t" style="left:677.00px;top:454.00px;font-size:5.5px;line-height:10px;color:#222;transform:scaleX(0.872);-webkit-text-stroke:0.14px #222;">630</div>
<div style="left:693px;top:75.2px;width:7.20px;height:29.80px;background:linear-gradient(90deg,#d8d8d8,#ececec 40%,#e6e6e6);"></div>
<div style="left:700.2px;top:75.2px;width:99.80px;height:448.30px;background:#c0c0c0;border-left:0.6px solid #e0e0e0;"></div>
<div style="left:700.2px;top:75.2px;width:99.80px;height:10.80px;background:#fff;border-top:0.6px solid #d4d4d4;"></div>
<div class="t" style="left:702.00px;top:76.00px;font-size:5.5px;line-height:10px;color:#a8a8a8;transform:scaleX(0.914);">Image Acquisition Controls</div>
<div style="left:710.7px;top:98px;width:77.30px;height:58.00px;border:1px solid #dadada;"></div>
<div style="left:712px;top:95.5px;width:30.00px;height:5.00px;background:#c0c0c0;"></div>
<div class="t" style="left:713.00px;top:93.00px;font-size:5.3px;line-height:10px;color:#000;transform:scaleX(0.856);-webkit-text-stroke:0.14px #000;">Autoexposure</div>
<div class="t" style="left:724.00px;top:108.00px;font-size:5.5px;line-height:10px;color:#111;transform:scaleX(0.775);-webkit-text-stroke:0.14px #111;">Gain</div>
<div style="left:761px;top:109px;width:19.50px;height:7.70px;background:#c0c0c0;border:1px solid;border-color:#808080 #fff #fff #808080;"></div>
<div class="t" style="left:762.50px;top:109.00px;font-size:4.8px;line-height:10px;color:#9a9a9a;transform:scaleX(0.886);">1.0000</div>
<div class="t" style="left:724.00px;top:123.00px;font-size:5.5px;line-height:10px;color:#111;transform:scaleX(0.775);-webkit-text-stroke:0.14px #111;">Exposure</div>
<div style="left:761px;top:123px;width:19.50px;height:7.70px;background:#c0c0c0;border:1px solid;border-color:#808080 #fff #fff #808080;"></div>
<div class="t" style="left:762.50px;top:123.00px;font-size:4.8px;line-height:10px;color:#9a9a9a;transform:scaleX(0.843);">1025</div>
<div style="left:714.5px;top:140.5px;width:66.50px;height:9.70px;background:#f0f0f0;border:1px solid;border-color:#fff #808080 #808080 #fff;box-shadow:0.6px 0.6px 0 #9a9a9a;"></div>
<div class="t" style="left:729.75px;top:140.00px;font-size:5.5px;line-height:10px;color:#000;transform:scaleX(0.812);-webkit-text-stroke:0.05px #000;">Do Auto Exposure</div>
<div style="left:710.7px;top:175px;width:77.30px;height:175.00px;border:1px solid #dadada;"></div>
<div style="left:712px;top:172.5px;width:32.00px;height:5.00px;background:#c0c0c0;"></div>
<div class="t" style="left:713.00px;top:170.00px;font-size:5.3px;line-height:10px;color:#000;transform:scaleX(0.815);-webkit-text-stroke:0.14px #000;">Fixed Exposure</div>
<div style="left:724px;top:185.5px;width:5.00px;height:5.00px;background:#fff;border-top:0.6px solid #b4b4b4;border-left:0.6px solid #b4b4b4;"></div>
<svg style="position:absolute;left:724px;top:185.5px" width="5" height="5" viewBox="0 0 10 10"><path d="M2 4.8 L4.2 7.2 L8.2 2.6" stroke="#000" stroke-width="2.1" fill="none"/></svg>
<div class="t" style="left:736.00px;top:183.00px;font-size:5.5px;line-height:10px;color:#111;transform:scaleX(0.806);-webkit-text-stroke:0.14px #111;">No Autoexposure</div>
<div class="t" style="left:712.00px;top:203.00px;font-size:5.5px;line-height:10px;color:#111;transform:scaleX(0.861);-webkit-text-stroke:0.14px #111;">Gain</div>
<div style="left:724px;top:204.5px;width:44.00px;height:6.50px;background:#f0f0f0;"></div>
<div style="left:724px;top:204.5px;width:6.50px;height:6.50px;background:#f0f0f0;border:0.5px solid;border-color:#fff #8a8a8a #8a8a8a #fff;"></div>
<svg style="position:absolute;left:0;top:0" width="1" height="1"><path d="M728.15 206.35 L728.15 209.15 L726.35 207.75Z" fill="#111"/></svg>
<div style="left:761.5px;top:204.5px;width:6.50px;height:6.50px;background:#f0f0f0;border:0.5px solid;border-color:#fff #8a8a8a #8a8a8a #fff;"></div>
<svg style="position:absolute;left:0;top:0" width="1" height="1"><path d="M763.85 206.35 L763.85 209.15 L765.65 207.75Z" fill="#111"/></svg>
<div style="left:731px;top:204.5px;width:6.50px;height:6.50px;background:#f0f0f0;border:0.5px solid;border-color:#fff #8a8a8a #8a8a8a #fff;"></div>
<div style="left:771.5px;top:204.5px;width:12.00px;height:7.00px;background:#fff;border:1px solid;border-color:#808080 #fff #fff #808080;"></div>
<div class="t" style="left:773.00px;top:204.00px;font-size:5.5px;line-height:10px;color:#000;transform:scaleX(0.841);-webkit-text-stroke:0.14px #000;">1.00</div>
<div class="t" style="left:712.00px;top:224.00px;font-size:5.5px;line-height:10px;color:#111;transform:scaleX(0.832);-webkit-text-stroke:0.14px #111;">Time</div>
<div style="left:724px;top:225.3px;width:44.00px;height:6.20px;background:#f0f0f0;"></div>
<div style="left:724px;top:225.3px;width:6.20px;height:6.20px;background:#f0f0f0;border:0.5px solid;border-color:#fff #8a8a8a #8a8a8a #fff;"></div>
<svg style="position:absolute;left:0;top:0" width="1" height="1"><path d="M728.00 227.00 L728.00 229.80 L726.20 228.40Z" fill="#111"/></svg>
<div style="left:761.8px;top:225.3px;width:6.20px;height:6.20px;background:#f0f0f0;border:0.5px solid;border-color:#fff #8a8a8a #8a8a8a #fff;"></div>
<svg style="position:absolute;left:0;top:0" width="1" height="1"><path d="M764.00 227.00 L764.00 229.80 L765.80 228.40Z" fill="#111"/></svg>
<div style="left:731px;top:225.3px;width:6.50px;height:6.20px;background:#f0f0f0;border:0.5px solid;border-color:#fff #8a8a8a #8a8a8a #fff;"></div>
<div style="left:771.5px;top:225px;width:12.00px;height:7.00px;background:#fff;border:1px solid;border-color:#808080 #fff #fff #808080;"></div>
<div class="t" style="left:773.00px;top:224.00px;font-size:5.5px;line-height:10px;color:#000;-webkit-text-stroke:0.14px #000;">40</div>
<div style="left:715px;top:239px;width:66.00px;height:9.00px;background:#f0f0f0;border:1px solid;border-color:#fff #808080 #808080 #fff;box-shadow:0.6px 0.6px 0 #9a9a9a;"></div>
<div class="t" style="left:720.50px;top:239.00px;font-size:5.5px;line-height:10px;color:#000;transform:scaleX(0.789);-webkit-text-stroke:0.05px #000;">Load Filter Default Exposure</div>
<div style="left:715px;top:253px;width:66.00px;height:9.00px;background:#f0f0f0;border:1px solid;border-color:#fff #808080 #808080 #fff;box-shadow:0.6px 0.6px 0 #9a9a9a;"></div>
<div class="t" style="left:715.50px;top:253.00px;font-size:5.5px;line-height:10px;color:#000;transform:scaleX(0.788);-webkit-text-stroke:0.05px #000;">Load All Filters Default Exposures</div>
<div style="left:714px;top:266px;width:68.00px;height:69.00px;background:#fff;border-left:1px solid #808080;border-top:1px solid #808080;"></div>
<div class="t" style="left:731.00px;top:338.00px;font-size:5.5px;line-height:10px;color:#111;transform:scaleX(0.818);-webkit-text-stroke:0.14px #111;">PixelIntensities</div>
<div style="left:711px;top:367px;width:77.00px;height:58.00px;border:1px solid #dadada;"></div>
<div style="left:713px;top:364.5px;width:28.00px;height:5.00px;background:#c0c0c0;"></div>
<div class="t" style="left:714.00px;top:362.00px;font-size:5.3px;line-height:10px;color:#000;transform:scaleX(0.825);-webkit-text-stroke:0.14px #000;">Configuration</div>
<div style="left:712px;top:377px;width:72.40px;height:7.50px;background:#fff;border:1px solid;border-color:#808080 #fff #fff #808080;"></div>
<div style="left:777.4px;top:377.5px;width:6.50px;height:6.50px;background:#e6e6e6;border:0.5px solid #b0b0b0;"></div>
<svg style="position:absolute;left:778.65px;top:379.25px" width="4" height="3" viewBox="0 0 4 3"><path d="M0 0.3 L4 0.3 L2 2.7Z" fill="#000"/></svg>
<div class="t" style="left:713.50px;top:376.00px;font-size:5.5px;line-height:10px;color:#000;transform:scaleX(0.765);-webkit-text-stroke:0.14px #000;">FLUOROSPOT</div>
<div style="left:711px;top:442px;width:77.00px;height:81.00px;border:1px solid #dadada;"></div>
<div style="left:712px;top:439.5px;width:37.00px;height:5.00px;background:#c0c0c0;"></div>
<div class="t" style="left:713.00px;top:437.00px;font-size:5.3px;line-height:10px;color:#000;transform:scaleX(0.867);-webkit-text-stroke:0.14px #000;">Acquisition Mode</div>
<div style="left:727px;top:454.3px;width:43.00px;height:8.90px;background:#f0f0f0;border:1px solid;border-color:#fff #808080 #808080 #fff;box-shadow:0.6px 0.6px 0 #9a9a9a;"></div>
<div class="t" style="left:732.00px;top:454.00px;font-size:5.5px;line-height:10px;color:#000;transform:scaleX(0.745);-webkit-text-stroke:0.05px #000;">Start Live Preview</div>
<div style="left:727px;top:468.5px;width:43.00px;height:8.50px;background:#f0f0f0;border:1px solid;border-color:#fff #808080 #808080 #fff;box-shadow:0.6px 0.6px 0 #9a9a9a;"></div>
<div class="t" style="left:732.00px;top:468.00px;font-size:5.5px;line-height:10px;color:#a8a8a8;transform:scaleX(0.750);-webkit-text-stroke:0.05px #a8a8a8;">Stop Live Preview</div>
<div style="left:727px;top:502.3px;width:43.00px;height:9.30px;background:#f0f0f0;border:1px solid;border-color:#fff #808080 #808080 #fff;box-shadow:0.6px 0.6px 0 #9a9a9a;"></div>
<div class="t" style="left:732.00px;top:502.00px;font-size:5.5px;line-height:10px;color:#000;transform:scaleX(0.720);-webkit-text-stroke:0.05px #000;">Grab Single Image</div>
</body></html>
